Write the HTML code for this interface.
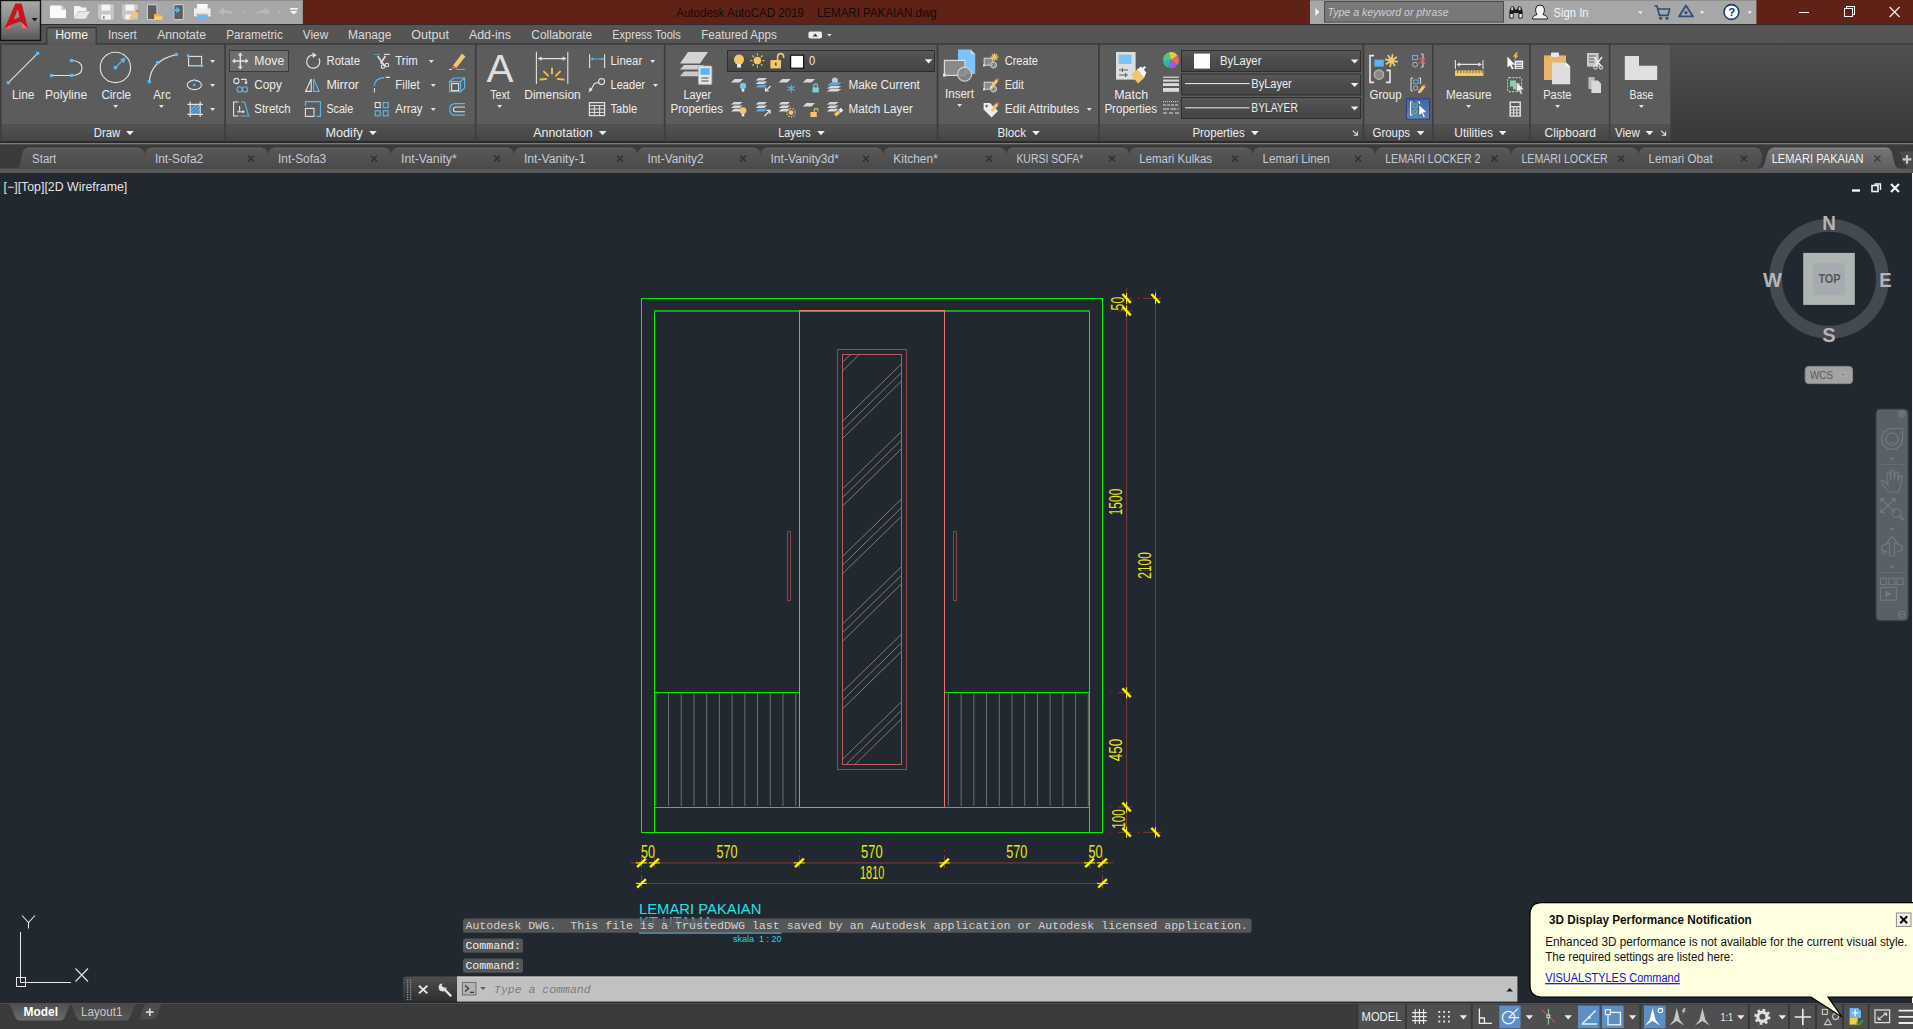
<!DOCTYPE html>
<html lang="en"><head><meta charset="utf-8"><title>Autodesk AutoCAD 2019 - LEMARI PAKAIAN.dwg</title>
<style>
html,body{margin:0;padding:0;background:#212830;overflow:hidden}
body{width:1913px;height:1029px;position:relative;font-family:"Liberation Sans",sans-serif}
.r{position:absolute;left:0;width:1913px;overflow:hidden}
.r svg{display:block}
.titlebar{background:#602116}
.menubar{background:#555555}
.ribbon{background:#454545}
.doctabs{background:#3b3b3b}
.canvas{background:#212830}
.statusbar{background:#3b3b3b}
.appbtn{width:42px}
text{white-space:pre}
</style></head><body>
<div class="r titlebar" style="top:0px;height:24px">
<svg width="1913" height="24" viewBox="0 0 1913 24">
<rect x="41" y="0" width="261.8" height="24" fill="#a7a7a7"/><rect x="41" y="0" width="261.8" height="1" fill="#8e8e8e"/>
<rect x="1310" y="0" width="446.4" height="24" fill="#a7a7a7"/><rect x="1310" y="0" width="446.4" height="1" fill="#8e8e8e"/>
<path d="M50 5.4 H61.4 L66 10 V18 H50 Z" fill="#fafafa"/><path d="M61.4 5.4 V10 H66 Z" fill="#c8c8c8"/>
<path d="M74 6 H80 L81.4 7.6 H86.4 V11 H78.6 L74 18.6 Z" fill="#f4f4f4"/><path d="M78.8 11.4 H90 L85.6 18.8 H74.2 Z" fill="#e4e8f0"/>
<path d="M98 4.6 H114 V19.6 H100 L98 17.6 Z" fill="#c6c6c6"/><rect x="101.4" y="4.6" width="9" height="6" fill="#f4f4f4"/><rect x="101.4" y="14.6" width="9.4" height="5" fill="#f4f4f4"/><rect x="103" y="16" width="1.6" height="3" fill="#8a8a8a"/>
<path d="M122 4.6 H138 V19.6 H124 L122 17.6 Z" fill="#c6c6c6"/><rect x="125.4" y="4.6" width="9" height="6" fill="#f4f4f4"/><rect x="125.4" y="14.6" width="6" height="5" fill="#f4f4f4"/><path d="M129.4 17.6 L135.4 10.6 L138.4 13 L132.4 19.6 L129 19.8 Z" fill="#f0c674"/><path d="M135.4 10.6 L136.6 9.4 L139.4 11.8 L138.4 13 Z" fill="#e06464"/>
<rect x="147.4" y="4.6" width="9.6" height="15" rx="1" fill="#5e5e5e" stroke="#c8c8c8" stroke-width="1.2"/><path d="M154 14 H158 L159 15 H162 V19.8 H154 Z" fill="#f0b040"/><path d="M155 16.4 H163 L161.6 19.8 H154 Z" fill="#f8d070"/>
<rect x="173.8" y="4.6" width="9.6" height="15" rx="1" fill="#5e5e5e" stroke="#c8c8c8" stroke-width="1.2"/><path d="M171.4 9 H176.4 V6.6 L180.4 10 L176.4 13.4 V11 H171.4 Z" fill="#58b4f0"/>
<rect x="197" y="4" width="10.6" height="5" fill="#fafafa"/><rect x="194" y="8.4" width="16.6" height="8" fill="#f0f0f0"/><rect x="197" y="14.6" width="10.6" height="5.2" fill="#6cb8f0"/><rect x="196" y="13.6" width="12.6" height="1.4" fill="#bcbcbc"/>
<path d="M218 11.6 L224 7.4 V10 Q232 9.6 233.6 14.8 Q230.6 12.4 224 13 V15.6 Z" fill="#b8b8b8"/>
<path d="M241.3 10.7 h4.6 l-2.3 2.6 z" fill="#b8b8b8"/>
<path d="M270.6 11.6 L264.6 7.4 V10 Q256.6 9.6 255 14.8 Q258 12.4 264.6 13 V15.6 Z" fill="#b8b8b8"/>
<path d="M277.1 10.7 h4.6 l-2.3 2.6 z" fill="#b8b8b8"/>
<rect x="290" y="8" width="7.6" height="1.6" fill="#f6f6f6"/><path d="M290.0 11.0 h7.6 l-3.8 3.6 z" fill="#f6f6f6"/>
<text x="676.2" y="16.5" font-family='"Liberation Sans",sans-serif' font-size="12" fill="#120c0a" textLength="260.6" lengthAdjust="spacingAndGlyphs" xml:space="preserve">Autodesk AutoCAD 2019    LEMARI PAKAIAN.dwg</text>
<path d="M1315.4 8 V16 L1319.4 12 Z" fill="#f4f4f4"/>
<rect x="1324.5" y="1.5" width="179" height="20.6" fill="#787878" stroke="#4c4c4c" stroke-width="1"/>
<text x="1327.6" y="16.4" font-family='"Liberation Sans",sans-serif' font-size="11.6" fill="#cfcfcf" font-style="italic" textLength="121.0" lengthAdjust="spacingAndGlyphs" >Type a keyword or phrase</text>
<path d="M1509.4 18.6 V11 L1511 6.4 H1514 L1515 9.6 H1517 L1518 6.4 H1521 L1522.6 11 V18.6 H1518.4 V13 H1513.6 V18.6 Z" fill="#1a1a1a"/><rect x="1510.4" y="14" width="2.4" height="3.6" fill="#e8e8e8"/><rect x="1519.4" y="14" width="2.4" height="3.6" fill="#e8e8e8"/><rect x="1511.2" y="7.2" width="2" height="3" fill="#d0d0d0"/><rect x="1518.6" y="7.2" width="2" height="3" fill="#d0d0d0"/>
<path d="M1532.4 19 Q1532.6 15.6 1537 14.6 Q1535.4 12.6 1535.6 9 Q1536 5 1540 5 Q1544 5 1544.4 9 Q1544.6 12.6 1543 14.6 Q1547.4 15.6 1547.6 19 Z" fill="#f2f2f2" stroke="#222" stroke-width="1"/>
<text x="1553.6" y="17.0" font-family='"Liberation Sans",sans-serif' font-size="12.4" fill="#eef6f6" textLength="35.0" lengthAdjust="spacingAndGlyphs" >Sign In</text>
<path d="M1638.1 11.3 h4.6 l-2.3 2.6 z" fill="#f0f0f0"/>
<path d="M1654.4 6 H1657 L1659.4 15.4 H1668 L1669.6 9 H1658" stroke="#24507c" stroke-width="1.6" fill="none"/><circle cx="1660.6" cy="18.2" r="1.5" fill="#24507c"/><circle cx="1667" cy="18.2" r="1.5" fill="#24507c"/>
<path d="M1686 5.4 L1693 16.4 H1679 Z" stroke="#2c4f7c" stroke-width="1.8" fill="none" stroke-linejoin="round"/><circle cx="1686" cy="12.6" r="1.6" fill="#2c4f7c"/>
<path d="M1699.7 11.3 h4.6 l-2.3 2.6 z" fill="#f0f0f0"/>
<circle cx="1731.4" cy="12" r="7.4" fill="#fafafa" stroke="#1c3c78" stroke-width="1.6"/>
<text x="1728.2" y="16.3" font-family='"Liberation Sans",sans-serif' font-size="11.5" fill="#1c3c78" font-weight="bold" >?</text>
<path d="M1747.5 11.3 h4.6 l-2.3 2.6 z" fill="#f0f0f0"/>
<g stroke="#f4f4f4" stroke-width="1" fill="none" shape-rendering="crispEdges">
<path d="M1799 12.5 H1809"/>
<rect x="1844.5" y="8.5" width="8" height="8"/><path d="M1846.5 8.5 V6.5 H1854.5 V14.5 H1852.5"/>
</g>
<path d="M1889.6 7 L1899.6 17 M1899.6 7 L1889.6 17" stroke="#f4f4f4" stroke-width="1.1" fill="none"/>
</svg>
</div>
<div class="r menubar" style="top:24px;height:20px">
<svg width="1913" height="20" viewBox="0 24 1913 20">
<defs><linearGradient id="hometab" x1="0" y1="0" x2="0" y2="1"><stop offset="0" stop-color="#626262"/><stop offset="1" stop-color="#5c5c5c"/></linearGradient></defs>
<rect x="0" y="24" width="1913" height="1" fill="#2e2e2e"/>
<rect x="0" y="43.3" width="1913" height="1.4" fill="#353535"/>
<path d="M46.8 45 V29 Q46.8 27.6 48.2 27.6 H94.8 Q96.2 27.6 96.2 29 V45" fill="url(#hometab)" stroke="#343434" stroke-width="1.1"/>
<text x="55.2" y="39.3" font-family='"Liberation Sans",sans-serif' font-size="12" fill="#f4f4f4" textLength="32.8" lengthAdjust="spacingAndGlyphs" >Home</text>
<text x="108.0" y="39.3" font-family='"Liberation Sans",sans-serif' font-size="12" fill="#dadada" textLength="28.8" lengthAdjust="spacingAndGlyphs" >Insert</text>
<text x="157.2" y="39.3" font-family='"Liberation Sans",sans-serif' font-size="12" fill="#dadada" textLength="48.8" lengthAdjust="spacingAndGlyphs" >Annotate</text>
<text x="226.2" y="39.3" font-family='"Liberation Sans",sans-serif' font-size="12" fill="#dadada" textLength="56.6" lengthAdjust="spacingAndGlyphs" >Parametric</text>
<text x="302.8" y="39.3" font-family='"Liberation Sans",sans-serif' font-size="12" fill="#dadada" textLength="25.4" lengthAdjust="spacingAndGlyphs" >View</text>
<text x="348.0" y="39.3" font-family='"Liberation Sans",sans-serif' font-size="12" fill="#dadada" textLength="43.4" lengthAdjust="spacingAndGlyphs" >Manage</text>
<text x="411.2" y="39.3" font-family='"Liberation Sans",sans-serif' font-size="12" fill="#dadada" textLength="37.8" lengthAdjust="spacingAndGlyphs" >Output</text>
<text x="469.0" y="39.3" font-family='"Liberation Sans",sans-serif' font-size="12" fill="#dadada" textLength="41.9" lengthAdjust="spacingAndGlyphs" >Add-ins</text>
<text x="531.3" y="39.3" font-family='"Liberation Sans",sans-serif' font-size="12" fill="#dadada" textLength="60.9" lengthAdjust="spacingAndGlyphs" >Collaborate</text>
<text x="612.2" y="39.3" font-family='"Liberation Sans",sans-serif' font-size="12" fill="#dadada" textLength="68.6" lengthAdjust="spacingAndGlyphs" >Express Tools</text>
<text x="701.2" y="39.3" font-family='"Liberation Sans",sans-serif' font-size="12" fill="#dadada" textLength="75.6" lengthAdjust="spacingAndGlyphs" >Featured Apps</text>
<rect x="808.4" y="31.6" width="13.6" height="7" rx="2" fill="#ececec"/><path d="M812.6 36.4 h5.2 l-2.6 -2.8 z" fill="#3c3c3c"/>
<path d="M827.1 33.9 h4.6 l-2.3 2.6 z" fill="#e0e0e0"/>
</svg>
</div>
<div class="r ribbon" style="top:44px;height:97px">
<svg width="1913" height="97" viewBox="0 44 1913 97">
<defs><linearGradient id="rbg" x1="0" y1="0" x2="0" y2="1"><stop offset="0" stop-color="#505050"/><stop offset="1" stop-color="#383838"/></linearGradient><linearGradient id="ptit" x1="0" y1="0" x2="0" y2="1"><stop offset="0" stop-color="#535353"/><stop offset="1" stop-color="#444444"/></linearGradient>
<linearGradient id="ddg" x1="0" y1="0" x2="0" y2="1"><stop offset="0" stop-color="#585858"/><stop offset="0.5" stop-color="#4b4b4b"/><stop offset="1" stop-color="#464646"/></linearGradient>
<linearGradient id="selb" x1="0" y1="0" x2="0" y2="1"><stop offset="0" stop-color="#3f64ac"/><stop offset="1" stop-color="#5f86b8"/></linearGradient></defs>
<rect x="0" y="43.3" width="1913" height="1.4" fill="#353535"/>
<rect x="47.4" y="43" width="48.2" height="2" fill="#5c5c5c"/>
<rect x="0" y="44.7" width="1675" height="96.7" fill="#3e3e3e"/>
<rect x="1671" y="44.7" width="242" height="96.7" fill="url(#rbg)"/>
<rect x="1.6" y="44.7" width="222.6" height="79.7" fill="#5c5c5c"/>
<rect x="1.6" y="124.4" width="222.6" height="17" fill="url(#ptit)"/>
<text x="93.8" y="136.7" font-family='"Liberation Sans",sans-serif' font-size="12" fill="#ececec" textLength="26.4" lengthAdjust="spacingAndGlyphs" >Draw</text>
<path d="M126.1 131.1 h7.6 l-3.8 4.2 z" fill="#f0f0f0"/>
<rect x="226.0" y="44.7" width="248.8" height="79.7" fill="#5c5c5c"/>
<rect x="226.0" y="124.4" width="248.8" height="17" fill="url(#ptit)"/>
<text x="325.6" y="136.7" font-family='"Liberation Sans",sans-serif' font-size="12" fill="#ececec" textLength="37.1" lengthAdjust="spacingAndGlyphs" >Modify</text>
<path d="M369.1 131.1 h7.6 l-3.8 4.2 z" fill="#f0f0f0"/>
<rect x="476.6" y="44.7" width="187.2" height="79.7" fill="#5c5c5c"/>
<rect x="476.6" y="124.4" width="187.2" height="17" fill="url(#ptit)"/>
<text x="533.2" y="136.7" font-family='"Liberation Sans",sans-serif' font-size="12" fill="#ececec" textLength="59.6" lengthAdjust="spacingAndGlyphs" >Annotation</text>
<path d="M598.9 131.1 h7.6 l-3.8 4.2 z" fill="#f0f0f0"/>
<rect x="665.6" y="44.7" width="271.0" height="79.7" fill="#5c5c5c"/>
<rect x="665.6" y="124.4" width="271.0" height="17" fill="url(#ptit)"/>
<text x="778.3" y="136.7" font-family='"Liberation Sans",sans-serif' font-size="12" fill="#ececec" textLength="32.5" lengthAdjust="spacingAndGlyphs" >Layers</text>
<path d="M817.2 131.1 h7.6 l-3.8 4.2 z" fill="#f0f0f0"/>
<rect x="938.4" y="44.7" width="159.6" height="79.7" fill="#5c5c5c"/>
<rect x="938.4" y="124.4" width="159.6" height="17" fill="url(#ptit)"/>
<text x="997.5" y="136.7" font-family='"Liberation Sans",sans-serif' font-size="12" fill="#ececec" textLength="28.5" lengthAdjust="spacingAndGlyphs" >Block</text>
<path d="M1032.2 131.1 h7.6 l-3.8 4.2 z" fill="#f0f0f0"/>
<rect x="1099.8" y="44.7" width="262.6" height="79.7" fill="#5c5c5c"/>
<rect x="1099.8" y="124.4" width="262.6" height="17" fill="url(#ptit)"/>
<text x="1192.4" y="136.7" font-family='"Liberation Sans",sans-serif' font-size="12" fill="#ececec" textLength="52.3" lengthAdjust="spacingAndGlyphs" >Properties</text>
<path d="M1251.1 131.1 h7.6 l-3.8 4.2 z" fill="#f0f0f0"/>
<rect x="1364.4" y="44.7" width="67.6" height="79.7" fill="#5c5c5c"/>
<rect x="1364.4" y="124.4" width="67.6" height="17" fill="url(#ptit)"/>
<text x="1372.5" y="136.7" font-family='"Liberation Sans",sans-serif' font-size="12" fill="#ececec" textLength="37.5" lengthAdjust="spacingAndGlyphs" >Groups</text>
<path d="M1416.8 131.1 h7.6 l-3.8 4.2 z" fill="#f0f0f0"/>
<rect x="1433.6" y="44.7" width="95.4" height="79.7" fill="#5c5c5c"/>
<rect x="1433.6" y="124.4" width="95.4" height="17" fill="url(#ptit)"/>
<text x="1454.2" y="136.7" font-family='"Liberation Sans",sans-serif' font-size="12" fill="#ececec" textLength="38.8" lengthAdjust="spacingAndGlyphs" >Utilities</text>
<path d="M1498.9 131.1 h7.6 l-3.8 4.2 z" fill="#f0f0f0"/>
<rect x="1530.8" y="44.7" width="78.0" height="79.7" fill="#5c5c5c"/>
<rect x="1530.8" y="124.4" width="78.0" height="17" fill="url(#ptit)"/>
<text x="1544.6" y="136.7" font-family='"Liberation Sans",sans-serif' font-size="12" fill="#ececec" textLength="51.4" lengthAdjust="spacingAndGlyphs" >Clipboard</text>
<rect x="1610.4" y="44.7" width="60.0" height="79.7" fill="#5c5c5c"/>
<rect x="1610.4" y="124.4" width="60.0" height="17" fill="url(#ptit)"/>
<text x="1615.0" y="136.7" font-family='"Liberation Sans",sans-serif' font-size="12" fill="#ececec" textLength="24.7" lengthAdjust="spacingAndGlyphs" >View</text>
<path d="M1645.7 131.1 h7.6 l-3.8 4.2 z" fill="#f0f0f0"/>
<path d="M1352.8 130.6 l4.6 4.6 m0 -3.8 v3.8 h-3.8" stroke="#e0e0e0" stroke-width="1.1" fill="none"/>
<path d="M1661.0 130.6 l4.6 4.6 m0 -3.8 v3.8 h-3.8" stroke="#e0e0e0" stroke-width="1.1" fill="none"/>
<path d="M8.4 82.6 L37.6 53.4" stroke="#e2e2e2" stroke-width="1.1"/><rect x="6.8" y="81.0" width="3.2" height="3.2" fill="#5cb8f0"/><rect x="36.0" y="51.8" width="3.2" height="3.2" fill="#5cb8f0"/>
<text x="12.0" y="98.8" font-family='"Liberation Sans",sans-serif' font-size="12" fill="#ececec" textLength="22.3" lengthAdjust="spacingAndGlyphs" >Line</text>
<path d="M51.5 75.5 H71.5 M71.5 60.5 Q82 61 82 68 Q82 75.5 71.5 75.5" stroke="#e2e2e2" stroke-width="1.1" fill="none"/><rect x="49.9" y="73.9" width="3.2" height="3.2" fill="#5cb8f0"/><rect x="69.9" y="73.9" width="3.2" height="3.2" fill="#5cb8f0"/><rect x="69.9" y="58.9" width="3.2" height="3.2" fill="#5cb8f0"/>
<text x="45.0" y="98.8" font-family='"Liberation Sans",sans-serif' font-size="12" fill="#ececec" textLength="42.2" lengthAdjust="spacingAndGlyphs" >Polyline</text>
<circle cx="115.4" cy="67.4" r="15.2" stroke="#e2e2e2" stroke-width="1.1" fill="none"/>
<path d="M116 67 L123.4 59.6" stroke="#5cb8f0" stroke-width="1.2"/><path d="M125.6 57.6 L120 59.2 L124 63.2 Z" fill="#5cb8f0"/><rect x="113.8" y="66.0" width="3.2" height="3.2" fill="#5cb8f0"/>
<text x="101.4" y="98.8" font-family='"Liberation Sans",sans-serif' font-size="12" fill="#ececec" textLength="29.6" lengthAdjust="spacingAndGlyphs" >Circle</text>
<path d="M113.1 105.1 h5.0 l-2.5 3.0 z" fill="#e2e2e2"/>
<path d="M149.3 81.6 Q151 60 176.4 54.6" stroke="#e2e2e2" stroke-width="1.1" fill="none"/><rect x="147.7" y="80.0" width="3.2" height="3.2" fill="#5cb8f0"/><rect x="156.0" y="61.0" width="3.2" height="3.2" fill="#5cb8f0"/><rect x="174.8" y="53.0" width="3.2" height="3.2" fill="#5cb8f0"/>
<text x="153.3" y="98.8" font-family='"Liberation Sans",sans-serif' font-size="12" fill="#ececec" textLength="17.4" lengthAdjust="spacingAndGlyphs" >Arc</text>
<path d="M158.9 105.1 h5.0 l-2.5 3.0 z" fill="#e2e2e2"/>
<rect x="188.6" y="56.4" width="13" height="9.4" stroke="#e2e2e2" stroke-width="1.1" fill="none"/><rect x="186.8" y="54.4" width="2.4" height="2.4" fill="#5cb8f0"/><rect x="200.8" y="64.8" width="2.4" height="2.4" fill="#5cb8f0"/>
<path d="M210.1 59.9 h5.0 l-2.5 3.0 z" fill="#e2e2e2"/>
<ellipse cx="194.4" cy="85" rx="7.2" ry="4.6" stroke="#e2e2e2" stroke-width="1.1" fill="none"/><rect x="193.1" y="78.9" width="2.2" height="2.2" fill="#5cb8f0"/><rect x="193.1" y="83.9" width="2.2" height="2.2" fill="#5cb8f0"/><rect x="200.3" y="83.9" width="2.2" height="2.2" fill="#5cb8f0"/>
<path d="M210.1 83.9 h5.0 l-2.5 3.0 z" fill="#e2e2e2"/>
<rect x="190.4" y="104.6" width="9.6" height="9.6" fill="#3d88c4"/><path d="M191 110 l5 -5 M191 113.6 l8.6 -8.6 M194.6 114 l5 -5" stroke="#8cc8f4" stroke-width="0.9"/>
<path d="M187.4 104.4 H203 M187.4 114.4 H203 M190.2 101.6 V117 M200.2 101.6 V117" stroke="#e2e2e2" stroke-width="1.1"/>
<path d="M210.1 107.9 h5.0 l-2.5 3.0 z" fill="#e2e2e2"/>
<rect x="229.5" y="50.5" width="59" height="21" fill="#6d6d6d" stroke="#3a3a3a" stroke-width="1"/>
<path d="M233.6 61 H247 M240.3 54.2 V67.8" stroke="#e2e2e2" stroke-width="1.4"/>
<path d="M240.3 52.4 l-2.6 3 h5.2 z M240.3 69.6 l-2.6 -3 h5.2 z M232 61 l3 -2.6 v5.2 z M248.6 61 l-3 -2.6 v5.2 z" fill="#e2e2e2"/>
<text x="254.3" y="64.7" font-family='"Liberation Sans",sans-serif' font-size="12" fill="#ececec" textLength="29.9" lengthAdjust="spacingAndGlyphs" >Move</text>
<circle cx="236.4" cy="81" r="2.6" stroke="#e2e2e2" stroke-width="1.1" fill="none"/><path d="M241 79.4 H246 V82.6" stroke="#e2e2e2" stroke-width="1.1" fill="none"/><path d="M246 84.4 l-1.8 -2.4 h3.6 z" fill="#e2e2e2"/>
<circle cx="239.6" cy="89.4" r="2.6" stroke="#5cb8f0" stroke-width="1.1" fill="none"/><circle cx="245" cy="89.4" r="2.6" stroke="#5cb8f0" stroke-width="1.1" fill="none"/>
<text x="254.3" y="88.6" font-family='"Liberation Sans",sans-serif' font-size="12" fill="#ececec" textLength="27.5" lengthAdjust="spacingAndGlyphs" >Copy</text>
<path d="M238.6 102 H233.6 V116 H238.6 M239.6 106 V111.6" stroke="#e2e2e2" stroke-width="1.1" fill="none"/><path d="M237 111.8 H243.6" stroke="#e2e2e2" stroke-width="1.1"/><path d="M245 111.8 l-2.6 -1.8 v3.6 z" fill="#e2e2e2"/>
<path d="M241 102 H244.6 L248.6 116 H240.6" stroke="#5cb8f0" stroke-width="1.1" fill="none"/>
<text x="254.3" y="112.6" font-family='"Liberation Sans",sans-serif' font-size="12" fill="#ececec" textLength="36.3" lengthAdjust="spacingAndGlyphs" >Stretch</text>
<path d="M313.4 55 A6.6 6.6 0 1 0 319 58.4" stroke="#e2e2e2" stroke-width="1.2" fill="none"/><path d="M312.6 52.2 L316.6 55.2 L312.6 58 Z" fill="#e2e2e2"/>
<text x="326.4" y="64.7" font-family='"Liberation Sans",sans-serif' font-size="12" fill="#ececec" textLength="33.6" lengthAdjust="spacingAndGlyphs" >Rotate</text>
<path d="M311.2 79 V91.4 H305.6 Z" stroke="#e2e2e2" stroke-width="1.1" fill="none"/><path d="M313.6 79 V91.4 H319.2 Z" stroke="#5cb8f0" stroke-width="1.1" fill="none"/>
<text x="326.4" y="88.6" font-family='"Liberation Sans",sans-serif' font-size="12" fill="#ececec" textLength="32.6" lengthAdjust="spacingAndGlyphs" >Mirror</text>
<rect x="305.4" y="108.4" width="8.6" height="8" stroke="#e2e2e2" stroke-width="1.1" fill="none"/><path d="M305.4 106 V101.6 H320.4 V116.4 H316.4" stroke="#5cb8f0" stroke-width="1.1" fill="none"/>
<text x="326.4" y="112.6" font-family='"Liberation Sans",sans-serif' font-size="12" fill="#ececec" textLength="26.8" lengthAdjust="spacingAndGlyphs" >Scale</text>
<path d="M374 54.4 H380" stroke="#5cb8f0" stroke-width="1" stroke-dasharray="1.4 1"/><path d="M384 54.4 H390" stroke="#e2e2e2" stroke-width="1.1"/>
<path d="M377.6 56 L384.6 66 M385.4 56 L380.6 63.6" stroke="#e2e2e2" stroke-width="1.6" fill="none"/><circle cx="383" cy="66.6" r="1.8" stroke="#e2e2e2" stroke-width="1.1" fill="none"/><circle cx="387" cy="65" r="1.8" stroke="#e2e2e2" stroke-width="1.1" fill="none"/>
<text x="395.3" y="64.7" font-family='"Liberation Sans",sans-serif' font-size="12" fill="#ececec" textLength="22.4" lengthAdjust="spacingAndGlyphs" >Trim</text>
<path d="M428.8 59.9 h5.0 l-2.5 3.0 z" fill="#e2e2e2"/>
<path d="M374.4 86 Q374.6 78 384 77.6" stroke="#5cb8f0" stroke-width="1.2" fill="none"/><path d="M374.4 88 V92.4 M385.6 77.4 H390" stroke="#e2e2e2" stroke-width="1.1"/>
<text x="395.3" y="88.6" font-family='"Liberation Sans",sans-serif' font-size="12" fill="#ececec" textLength="24.4" lengthAdjust="spacingAndGlyphs" >Fillet</text>
<path d="M430.8 83.9 h5.0 l-2.5 3.0 z" fill="#e2e2e2"/>
<rect x="375.2" y="102.6" width="5" height="5" stroke="#e2e2e2" stroke-width="1.1" fill="none"/>
<rect x="383.2" y="102.6" width="5" height="5" stroke="#5cb8f0" stroke-width="1.1" fill="none"/>
<rect x="375.2" y="110.8" width="5" height="5" stroke="#5cb8f0" stroke-width="1.1" fill="none"/>
<rect x="383.2" y="110.8" width="5" height="5" stroke="#5cb8f0" stroke-width="1.1" fill="none"/>
<text x="395.3" y="112.6" font-family='"Liberation Sans",sans-serif' font-size="12" fill="#ececec" textLength="27.2" lengthAdjust="spacingAndGlyphs" >Array</text>
<path d="M430.8 107.9 h5.0 l-2.5 3.0 z" fill="#e2e2e2"/>
<path d="M453 65.4 L462 53.6 L465.4 56.4 L456.4 68 Z" fill="#f4c66c"/><path d="M453 65.4 L456.4 68 L454.6 69.6 L451.6 67.4 Z" fill="#e85a5a"/><path d="M449 69.4 H452" stroke="#e2e2e2" stroke-width="1"/><path d="M456 69.4 H465" stroke="#5cb8f0" stroke-width="1"/>
<path d="M449.6 81.6 L453.6 78 H464.6 L460.6 81.6 Z M460.6 81.6 V91.6 L464.6 88 V78" stroke="#5cb8f0" stroke-width="1.1" fill="none"/><rect x="451.6" y="83.6" width="7" height="7" stroke="#e2e2e2" stroke-width="1.1" fill="none"/><path d="M449.6 81.6 V91.6 H460.6" stroke="#5cb8f0" stroke-width="1.1" fill="none"/>
<path d="M465 103.6 H455.6 Q449.8 103.6 449.8 109.4 Q449.8 115.2 455.6 115.2 H465" stroke="#5cb8f0" stroke-width="1.2" fill="none"/><path d="M465 107 H456 Q453.4 107 453.4 109.4 Q453.4 111.8 456 111.8 H465" stroke="#e2e2e2" stroke-width="1.1" fill="none"/>
<text x="486.4" y="81.9" font-family='"Liberation Sans",sans-serif' font-size="39" fill="#dedede" textLength="27.0" lengthAdjust="spacingAndGlyphs" >A</text>
<text x="490.3" y="98.8" font-family='"Liberation Sans",sans-serif' font-size="12" fill="#ececec" textLength="19.5" lengthAdjust="spacingAndGlyphs" >Text</text>
<path d="M497.1 105.1 h5.0 l-2.5 3.0 z" fill="#e2e2e2"/>
<path d="M536.4 51.8 V84 M567.8 51.8 V84 M539.6 58.6 H564.6" stroke="#e2e2e2" stroke-width="1.1" fill="none"/><path d="M537.6 58.6 l4 -2.2 v4.4 z M566.6 58.6 l-4 -2.2 v4.4 z" fill="#e2e2e2"/>
<path d="M552.0 68.4 L552.0 73.6" stroke="#f4b848" stroke-width="2" stroke-linecap="round"/>
<path d="M544.0 71.6 L548.0 75.6" stroke="#f4b848" stroke-width="2" stroke-linecap="round"/>
<path d="M560.0 71.6 L556.0 75.6" stroke="#f4b848" stroke-width="2" stroke-linecap="round"/>
<path d="M540.6 79.6 L546.0 79.0" stroke="#f4b848" stroke-width="2" stroke-linecap="round"/>
<path d="M563.6 79.6 L558.0 79.0" stroke="#f4b848" stroke-width="2" stroke-linecap="round"/>
<text x="524.3" y="98.8" font-family='"Liberation Sans",sans-serif' font-size="12" fill="#ececec" textLength="56.4" lengthAdjust="spacingAndGlyphs" >Dimension</text>
<path d="M589.6 54.2 V68 M604.6 54.2 V68" stroke="#e2e2e2" stroke-width="1.1"/><path d="M591 59 H603.4" stroke="#5cb8f0" stroke-width="1"/><path d="M590.4 59 l2.6 -1.6 v3.2 z M604 59 l-2.6 -1.6 v3.2 z" fill="#5cb8f0"/>
<text x="610.5" y="64.7" font-family='"Liberation Sans",sans-serif' font-size="12" fill="#ececec" textLength="31.7" lengthAdjust="spacingAndGlyphs" >Linear</text>
<path d="M650.2 59.9 h5.0 l-2.5 3.0 z" fill="#e2e2e2"/>
<circle cx="601.6" cy="81.6" r="3" stroke="#e2e2e2" stroke-width="1.1" fill="none"/><path d="M598.6 82.4 L594.6 83.4 L590.6 90" stroke="#e2e2e2" stroke-width="1.1" fill="none"/><path d="M588.6 92.4 L589.6 87.6 L592.8 89.8 Z" fill="#e2e2e2"/>
<text x="610.5" y="88.6" font-family='"Liberation Sans",sans-serif' font-size="12" fill="#ececec" textLength="34.5" lengthAdjust="spacingAndGlyphs" >Leader</text>
<path d="M653.0 83.9 h5.0 l-2.5 3.0 z" fill="#e2e2e2"/>
<rect x="589.4" y="102.6" width="15.2" height="13" stroke="#e2e2e2" stroke-width="1.2" fill="none"/><path d="M589.4 105.6 H604.6 M589.4 109 H604.6 M589.4 112.4 H604.6 M594.4 105.6 V115.6 M599.6 105.6 V115.6" stroke="#e2e2e2" stroke-width="1"/>
<text x="610.5" y="112.6" font-family='"Liberation Sans",sans-serif' font-size="12" fill="#ececec" textLength="26.7" lengthAdjust="spacingAndGlyphs" >Table</text>
<path d="M688.0 52.0 H708.0 L700.0 63.6 H680.0 Z" fill="#d4d4d4"/>
<path d="M684.0 65.0 H704.0 L700.0 69.6 H680.0 Z" fill="#cfcfcf"/>
<path d="M684.0 71.6 H704.0 L700.0 76.2 H680.0 Z" fill="#cacaca"/>
<rect x="698.4" y="66" width="13.4" height="18.4" rx="1" fill="#e6e6e6" stroke="#b0b0b0" stroke-width="0.8"/><rect x="700.4" y="68.2" width="9.4" height="6.6" fill="#5cb4f4"/><path d="M701.4 78 H708.6 M701.4 81 H708.6" stroke="#4a4a4a" stroke-width="1"/>
<text x="683.4" y="98.9" font-family='"Liberation Sans",sans-serif' font-size="12" fill="#ececec" textLength="27.8" lengthAdjust="spacingAndGlyphs" >Layer</text>
<text x="670.5" y="113.4" font-family='"Liberation Sans",sans-serif' font-size="12" fill="#ececec" textLength="52.5" lengthAdjust="spacingAndGlyphs" >Properties</text>
<rect x="727.5" y="50.5" width="207" height="21" fill="url(#ddg)" stroke="#2e2e2e" stroke-width="1"/>
<circle cx="739" cy="59.6" r="5" fill="#f4c66c"/><rect x="737" y="64" width="4" height="3.6" fill="#e8e8e8"/>
<circle cx="757.4" cy="60.6" r="3.8" fill="#f4c66c"/>
<path d="M762.4 60.6 L764.6 60.6" stroke="#f4c66c" stroke-width="1.1"/>
<path d="M760.9 64.1 L762.5 65.7" stroke="#f4c66c" stroke-width="1.1"/>
<path d="M757.4 65.6 L757.4 67.8" stroke="#f4c66c" stroke-width="1.1"/>
<path d="M753.9 64.1 L752.3 65.7" stroke="#f4c66c" stroke-width="1.1"/>
<path d="M752.4 60.6 L750.2 60.6" stroke="#f4c66c" stroke-width="1.1"/>
<path d="M753.9 57.1 L752.3 55.5" stroke="#f4c66c" stroke-width="1.1"/>
<path d="M757.4 55.6 L757.4 53.4" stroke="#f4c66c" stroke-width="1.1"/>
<path d="M760.9 57.1 L762.5 55.5" stroke="#f4c66c" stroke-width="1.1"/>
<rect x="770.4" y="60" width="10.6" height="8.4" fill="#f4c66c"/><path d="M777.6 60 V56.6 Q777.6 53.6 780.6 53.6 Q783.6 53.6 783.6 56.6 V58" stroke="#f4c66c" stroke-width="1.6" fill="none"/><rect x="775" y="62.6" width="1.6" height="3" fill="#5a4a2a"/>
<rect x="790.6" y="55.2" width="13" height="13" fill="#ffffff" stroke="#101010" stroke-width="1.2"/>
<text x="809.0" y="64.7" font-family='"Liberation Sans",sans-serif' font-size="12" fill="#ececec" textLength="6.2" lengthAdjust="spacingAndGlyphs" >0</text>
<path d="M924.8 59.3 h7.6 l-3.8 4.2 z" fill="#f0f0f0"/>
<path d="M734.6 79.0 H743.2 L739.6 82.4 H731.0 Z" fill="#d8d8d8"/>
<circle cx="743.0" cy="86.0" r="3.2" fill="#7cc4e0"/><rect x="741.7" y="89.0" width="2.6" height="2.6" fill="#e8e8e8"/>
<path d="M758.5 78.0 H767.1 L764.1 80.6 H755.5 Z" fill="#d8d8d8"/>
<path d="M758.5 81.4 H767.1 L764.1 84.0 H755.5 Z" fill="#d8d8d8"/>
<path d="M758.5 84.8 H767.1 L764.1 87.4 H755.5 Z" fill="#5aa8e8"/>
<path d="M770.5 86.0 l-5 5 m0 -3.4 v3.4 h3.4" stroke="#e8e8e8" stroke-width="1.2" fill="none"/>
<path d="M782.2 79.0 H790.8 L787.2 82.4 H778.6 Z" fill="#d8d8d8"/>
<path d="M791.2 84.4 v8 m-3.6 -6 l7.2 4 m0 -4 l-7.2 4" stroke="#58b0e8" stroke-width="1.2"/>
<path d="M806.4 79.0 H815.0 L811.4 82.4 H802.8 Z" fill="#d8d8d8"/>
<rect x="812.4" y="87.4" width="6.4" height="5" fill="#7cd0e0"/><path d="M813.7 87.4 v-1.6 a1.9 1.9 0 0 1 3.8 0 v1.6" stroke="#7cd0e0" stroke-width="1.1" fill="none"/>
<circle cx="834.9" cy="80.4" r="3" fill="#c8c8c8"/>
<path d="M830.9 82.4 H841.9 L837.9 85.4 H826.9 Z" fill="#5aa8e8"/>
<path d="M830.3 86.0 H841.3 L837.9 88.6 H826.9 Z" fill="#d8d8d8"/>
<path d="M830.3 89.0 H841.3 L837.9 91.6 H826.9 Z" fill="#d8d8d8"/>
<path d="M734.0 102.0 H742.6 L739.6 104.6 H731.0 Z" fill="#d8d8d8"/>
<path d="M734.0 105.4 H742.6 L739.6 108.0 H731.0 Z" fill="#d8d8d8"/>
<path d="M734.0 108.8 H742.6 L739.6 111.4 H731.0 Z" fill="#d8d8d8"/>
<circle cx="743.0" cy="110.6" r="3.4" fill="#f4c66c"/><rect x="741.7" y="113.8" width="2.6" height="2.6" fill="#e8e8e8"/>
<path d="M758.5 102.0 H767.1 L764.1 104.6 H755.5 Z" fill="#d8d8d8"/>
<path d="M758.5 105.4 H767.1 L764.1 108.0 H755.5 Z" fill="#d8d8d8"/>
<path d="M758.5 108.8 H767.1 L764.1 111.4 H755.5 Z" fill="#5aa8e8"/>
<path d="M764.5 116.0 l5.6 -5.6 m-3.6 0 h3.6 v3.6" stroke="#e8e8e8" stroke-width="1.2" fill="none"/>
<path d="M781.6 102.0 H790.2 L787.2 104.6 H778.6 Z" fill="#d8d8d8"/>
<path d="M781.6 105.4 H790.2 L787.2 108.0 H778.6 Z" fill="#d8d8d8"/>
<path d="M781.6 108.8 H790.2 L787.2 111.4 H778.6 Z" fill="#d8d8d8"/>
<circle cx="791.0" cy="112.6" r="2.4" fill="#f4c66c"/><circle cx="791.0" cy="112.6" r="4.2" stroke="#f4c66c" stroke-width="1.2" stroke-dasharray="1.2 1.4" fill="none"/>
<path d="M806.4 103.0 H815.0 L811.4 106.4 H802.8 Z" fill="#d8d8d8"/>
<rect x="810.4" y="112.0" width="6.4" height="5" fill="#f4c66c"/><path d="M814.2 112.0 v-1.6 a1.9 1.9 0 0 1 3.8 0 v0.8" stroke="#f4c66c" stroke-width="1.1" fill="none"/>
<path d="M829.9 102.0 H838.5 L835.5 104.6 H826.9 Z" fill="#d8d8d8"/>
<path d="M829.9 105.4 H838.5 L835.5 108.0 H826.9 Z" fill="#d8d8d8"/>
<path d="M829.9 108.8 H838.5 L835.5 111.4 H826.9 Z" fill="#d8d8d8"/>
<path d="M833.9 114.0 l4 -3.6 l2.4 2.6 l-4 3.6 z" fill="#f4c66c"/><path d="M838.3 110.2 l2.6 -2.4 l2.4 2.6 l-2.6 2.4 z" fill="#f0f0f0"/>
<text x="848.4" y="88.6" font-family='"Liberation Sans",sans-serif' font-size="12" fill="#ececec" textLength="71.4" lengthAdjust="spacingAndGlyphs" >Make Current</text>
<text x="848.4" y="112.6" font-family='"Liberation Sans",sans-serif' font-size="12" fill="#ececec" textLength="64.4" lengthAdjust="spacingAndGlyphs" >Match Layer</text>
<path d="M958 49.6 H970.6 L975.2 54.2 V74 H958 Z" fill="#7cc4f8"/><path d="M970.6 49.6 V54.2 H975.2 Z" fill="#b8dcf8"/>
<rect x="944.4" y="60.4" width="20.6" height="15" fill="#8a8a8a" stroke="#dcdcdc" stroke-width="1.2"/><circle cx="964.6" cy="74.2" r="7" fill="#8a8a8a" fill-opacity="0.85" stroke="#d0d0d0" stroke-width="1.2"/><rect x="943" y="73.6" width="3" height="3" fill="#e0e0e0"/>
<text x="945.0" y="98.2" font-family='"Liberation Sans",sans-serif' font-size="12" fill="#ececec" textLength="28.9" lengthAdjust="spacingAndGlyphs" >Insert</text>
<path d="M957.1 104.1 h5.0 l-2.5 3.0 z" fill="#e2e2e2"/>
<rect x="984.2" y="58.2" width="8.6" height="7" fill="#8a8a8a" stroke="#d8d8d8" stroke-width="1"/><circle cx="993.6" cy="65.0" r="3" fill="#8a8a8a" stroke="#d0d0d0" stroke-width="1"/><rect x="983.0" y="64.4" width="2" height="2" fill="#e0e0e0"/>
<path d="M994.6 57.0 L998.4 57.0" stroke="#f4c66c" stroke-width="1.3"/>
<path d="M994.6 57.0 L997.3 59.7" stroke="#f4c66c" stroke-width="1.3"/>
<path d="M994.6 57.0 L994.6 60.8" stroke="#f4c66c" stroke-width="1.3"/>
<path d="M994.6 57.0 L991.9 59.7" stroke="#f4c66c" stroke-width="1.3"/>
<path d="M994.6 57.0 L990.8 57.0" stroke="#f4c66c" stroke-width="1.3"/>
<path d="M994.6 57.0 L991.9 54.3" stroke="#f4c66c" stroke-width="1.3"/>
<path d="M994.6 57.0 L994.6 53.2" stroke="#f4c66c" stroke-width="1.3"/>
<path d="M994.6 57.0 L997.3 54.3" stroke="#f4c66c" stroke-width="1.3"/>
<rect x="984.2" y="82.2" width="8.6" height="7" fill="#8a8a8a" stroke="#d8d8d8" stroke-width="1"/><circle cx="993.6" cy="89.0" r="3" fill="#8a8a8a" stroke="#d0d0d0" stroke-width="1"/><rect x="983.0" y="88.4" width="2" height="2" fill="#e0e0e0"/>
<path d="M990.6 86 L996 79 L998.4 81 L993 88 Z" fill="#f4c66c"/><path d="M996 79 L997 77.6 L999.4 79.6 L998.4 81 Z" fill="#e85a5a"/><path d="M990.6 86 L993 88 L990 88.8 Z" fill="#f0f0f0"/>
<path d="M983.6 103 H990 L998 111 L991.6 117.4 L983.6 109.4 Z" fill="#ececec"/><circle cx="986.6" cy="106" r="1.2" fill="#5c5c5c"/><path d="M990.6 110 L996 103 L998.4 105 L993 112 Z" fill="#f4c66c"/><path d="M996 103 L997 101.6 L999.4 103.6 L998.4 105 Z" fill="#e85a5a"/>
<text x="1004.7" y="64.7" font-family='"Liberation Sans",sans-serif' font-size="12" fill="#ececec" textLength="33.2" lengthAdjust="spacingAndGlyphs" >Create</text>
<text x="1004.7" y="88.6" font-family='"Liberation Sans",sans-serif' font-size="12" fill="#ececec" textLength="19.2" lengthAdjust="spacingAndGlyphs" >Edit</text>
<text x="1004.7" y="112.6" font-family='"Liberation Sans",sans-serif' font-size="12" fill="#ececec" textLength="74.6" lengthAdjust="spacingAndGlyphs" >Edit Attributes</text>
<path d="M1086.8 107.9 h5.0 l-2.5 3.0 z" fill="#e2e2e2"/>
<rect x="1116" y="52" width="19.6" height="27.6" fill="#dedede"/><rect x="1118.6" y="54.6" width="13" height="9.4" fill="#7cc4f8"/><path d="M1119 70 H1128 M1122.4 68 V72 M1119 75 H1128 M1125.6 73 V77" stroke="#5a5a5a" stroke-width="1"/>
<path d="M1131 74.6 L1137 69.6 L1144 78 L1138 83.4 Z" fill="#f4c66c"/><path d="M1137 69.6 L1141 66.4 L1146.4 72.6 L1144 78 Z" fill="#f4f4f4"/><path d="M1141.6 68.6 L1144.6 66 L1146 67.6 L1143 70.4 Z" fill="#f4f4f4"/>
<text x="1114.2" y="98.8" font-family='"Liberation Sans",sans-serif' font-size="12" fill="#ececec" textLength="33.9" lengthAdjust="spacingAndGlyphs" >Match</text>
<text x="1104.4" y="113.4" font-family='"Liberation Sans",sans-serif' font-size="12" fill="#ececec" textLength="52.7" lengthAdjust="spacingAndGlyphs" >Properties</text>
<path d="M1171 60 L1168.6 52.4 A8 8 0 0 1 1177.5 55.4 Z" fill="#e8c84c"/>
<path d="M1171 60 L1177.5 55.4 A8 8 0 0 1 1177.4 64.8 Z" fill="#e86a5a"/>
<path d="M1171 60 L1177.4 64.8 A8 8 0 0 1 1168.4 67.6 Z" fill="#9a5ae8"/>
<path d="M1171 60 L1168.4 67.6 A8 8 0 0 1 1163.0 59.9 Z" fill="#38b4a4"/>
<path d="M1171 60 L1163.0 59.9 A8 8 0 0 1 1168.6 52.4 Z" fill="#4cc878"/>
<rect x="1163" y="76.6" width="16" height="1.2" fill="#dcdcdc"/>
<rect x="1163" y="79.6" width="16" height="2.0" fill="#dcdcdc"/>
<rect x="1163" y="83.2" width="16" height="2.8" fill="#dcdcdc"/>
<rect x="1163" y="88.0" width="16" height="3.8" fill="#dcdcdc"/>
<path d="M1163 101.6 H1179" stroke="#dcdcdc" stroke-width="1" stroke-dasharray="1 1"/><path d="M1163 105 H1179" stroke="#dcdcdc" stroke-width="1" stroke-dasharray="3 1"/><path d="M1163 109 H1179" stroke="#dcdcdc" stroke-width="1.2" stroke-dasharray="6 1.4"/><path d="M1163 113 H1179" stroke="#dcdcdc" stroke-width="1.2" stroke-dasharray="4 2"/>
<rect x="1181.5" y="50.5" width="179" height="21" fill="url(#ddg)" stroke="#2e2e2e" stroke-width="1"/>
<path d="M1350.8 59.4 h7.6 l-3.8 4.2 z" fill="#f0f0f0"/>
<rect x="1181.5" y="74.0" width="179" height="21" fill="url(#ddg)" stroke="#2e2e2e" stroke-width="1"/>
<path d="M1350.8 82.9 h7.6 l-3.8 4.2 z" fill="#f0f0f0"/>
<rect x="1181.5" y="97.5" width="179" height="21" fill="url(#ddg)" stroke="#2e2e2e" stroke-width="1"/>
<path d="M1350.8 106.4 h7.6 l-3.8 4.2 z" fill="#f0f0f0"/>
<rect x="1194" y="53.6" width="16" height="15" fill="#ffffff"/>
<text x="1220.0" y="64.7" font-family='"Liberation Sans",sans-serif' font-size="12" fill="#ececec" textLength="41.4" lengthAdjust="spacingAndGlyphs" >ByLayer</text>
<path d="M1185.2 83.6 H1249.4 M1185.2 107.8 H1249.4" stroke="#f0f0f0" stroke-width="1"/>
<text x="1251.3" y="87.7" font-family='"Liberation Sans",sans-serif' font-size="12" fill="#ececec" textLength="40.4" lengthAdjust="spacingAndGlyphs" >ByLayer</text>
<text x="1251.3" y="111.8" font-family='"Liberation Sans",sans-serif' font-size="12" fill="#ececec" textLength="46.5" lengthAdjust="spacingAndGlyphs" >BYLAYER</text>
<path d="M1374 55.6 H1370 V82.4 H1374 M1386.4 70.4 H1390 V82.4 H1386" stroke="#e8e8e8" stroke-width="1.6" fill="none"/>
<rect x="1374.4" y="59.6" width="9.4" height="7" fill="#5cb4f4"/><circle cx="1379" cy="74.6" r="4.6" fill="#8a8a8a" stroke="#b0b0b0" stroke-width="1.4"/>
<path d="M1391.4 60.6 L1397.9 61.9" stroke="#f4c66c" stroke-width="1.8"/>
<path d="M1391.4 60.6 L1395.0 66.1" stroke="#f4c66c" stroke-width="1.8"/>
<path d="M1391.4 60.6 L1390.1 67.1" stroke="#f4c66c" stroke-width="1.8"/>
<path d="M1391.4 60.6 L1385.9 64.2" stroke="#f4c66c" stroke-width="1.8"/>
<path d="M1391.4 60.6 L1384.9 59.3" stroke="#f4c66c" stroke-width="1.8"/>
<path d="M1391.4 60.6 L1387.8 55.1" stroke="#f4c66c" stroke-width="1.8"/>
<path d="M1391.4 60.6 L1392.7 54.1" stroke="#f4c66c" stroke-width="1.8"/>
<path d="M1391.4 60.6 L1396.9 57.0" stroke="#f4c66c" stroke-width="1.8"/>
<circle cx="1391.4" cy="60.6" r="3" fill="#f4c66c"/>
<text x="1369.5" y="98.8" font-family='"Liberation Sans",sans-serif' font-size="12" fill="#ececec" textLength="32.1" lengthAdjust="spacingAndGlyphs" >Group</text>
<rect x="1412.6" y="55.6" width="5" height="4" stroke="#5cb4f4" stroke-width="1" fill="none"/><circle cx="1415" cy="64.6" r="2.4" stroke="#b8b8b8" stroke-width="1" fill="none"/><path d="M1421 54 H1423 V67 H1421" stroke="#e0e0e0" stroke-width="1" fill="none"/><path d="M1419.6 58 l5.6 5.6 m0 -5.6 l-5.6 5.6" stroke="#e85a6a" stroke-width="1.4"/>
<path d="M1413 78 H1411 V91 H1413 M1418.6 78 H1420.6 V84" stroke="#e0e0e0" stroke-width="1" fill="none"/><rect x="1413.6" y="80" width="4.6" height="3.6" stroke="#5cb4f4" stroke-width="1" fill="none"/><circle cx="1415.6" cy="88" r="2.2" stroke="#b8b8b8" stroke-width="1" fill="none"/><path d="M1418.6 90.6 L1423 85 L1425.4 87 L1421 92.4 Z" fill="#f4c66c"/><path d="M1418.6 90.6 L1421 92.4 L1418 93 Z" fill="#f0f0f0"/><path d="M1423 85 L1424 83.8 L1426.4 85.8 L1425.4 87 Z" fill="#e85a5a"/>
<rect x="1406.4" y="98.8" width="23.2" height="20.4" fill="url(#selb)" stroke="#2a3f86" stroke-width="1"/>
<path d="M1412.6 102 H1410.6 V115 H1412.6 M1417.6 102 H1419.6 V104" stroke="#f0f0f0" stroke-width="1.1" fill="none"/><rect x="1413.2" y="104" width="4" height="3.4" stroke="#58c878" stroke-width="1" fill="none"/><circle cx="1415" cy="111.6" r="2" stroke="#58c878" stroke-width="1" fill="none"/>
<path d="M1419 104.6 V116 L1421.6 113.6 L1423.6 118 L1425.4 117 L1423.4 112.8 L1427 112.4 Z" fill="#ffffff" stroke="#2a3a6a" stroke-width="0.5"/>
<path d="M1455.4 60 V69 M1483 60 V69 M1458 64.4 H1480.6" stroke="#e2e2e2" stroke-width="1.1"/><path d="M1456.4 64.4 l3.6 -2 v4 z M1482 64.4 l-3.6 -2 v4 z" fill="#e2e2e2"/>
<rect x="1455" y="70.4" width="28.4" height="5.6" fill="#f4c66c"/>
<rect x="1457.4" y="70.4" width="1" height="2.6" fill="#7a6030"/>
<rect x="1460.4" y="70.4" width="1" height="2.6" fill="#7a6030"/>
<rect x="1463.4" y="70.4" width="1" height="2.6" fill="#7a6030"/>
<rect x="1466.4" y="70.4" width="1" height="2.6" fill="#7a6030"/>
<rect x="1469.4" y="70.4" width="1" height="2.6" fill="#7a6030"/>
<rect x="1472.4" y="70.4" width="1" height="2.6" fill="#7a6030"/>
<rect x="1475.4" y="70.4" width="1" height="2.6" fill="#7a6030"/>
<rect x="1478.4" y="70.4" width="1" height="2.6" fill="#7a6030"/>
<rect x="1481.4" y="70.4" width="1" height="2.6" fill="#7a6030"/>
<text x="1446.0" y="98.8" font-family='"Liberation Sans",sans-serif' font-size="12" fill="#ececec" textLength="45.6" lengthAdjust="spacingAndGlyphs" >Measure</text>
<path d="M1466.1 105.1 h5.0 l-2.5 3.0 z" fill="#e2e2e2"/>
<path d="M1507.4 56.6 V67.6 L1510 65.4 L1512 69.4 L1513.6 68.6 L1511.6 64.8 L1515 64.4 Z" fill="#f4f4f4"/><rect x="1514.6" y="60.6" width="8.6" height="8.4" fill="#f0f0f0"/><path d="M1516 63 H1522 M1516 65.4 H1522 M1516 67.6 H1522" stroke="#3d7ac4" stroke-width="1"/><path d="M1516 52.6 l-3 4.2 h2.4 l-1.6 3.6 l4.6 -5 h-2.4 l2 -2.8 z" fill="#f4c040"/>
<rect x="1507.6" y="77.6" width="14" height="14" rx="1.6" stroke="#8ce0b0" stroke-width="1.1" stroke-dasharray="2 1.2" fill="none"/><path d="M1510 80.4 H1516 V83 H1519.6 V89.6 H1513 V86.6 H1510 Z" fill="#8cd0a8"/><path d="M1516.6 82 V92.6 L1519 90.4 L1520.8 94.4 L1522.4 93.6 L1520.6 89.8 L1524 89.6 Z" fill="#f4f4f4" stroke="#4a4a4a" stroke-width="0.4"/>
<rect x="1509.4" y="101.4" width="11.6" height="15.4" fill="#d8d8d8"/><rect x="1511" y="103" width="8.4" height="3" fill="#5c5c5c"/>
<rect x="1511.0" y="107.4" width="2" height="2" fill="#5c5c5c"/>
<rect x="1514.2" y="107.4" width="2" height="2" fill="#5c5c5c"/>
<rect x="1517.4" y="107.4" width="2" height="2" fill="#5c5c5c"/>
<rect x="1511.0" y="110.4" width="2" height="2" fill="#5c5c5c"/>
<rect x="1514.2" y="110.4" width="2" height="2" fill="#5c5c5c"/>
<rect x="1517.4" y="110.4" width="2" height="2" fill="#5c5c5c"/>
<rect x="1511.0" y="113.4" width="2" height="2" fill="#5c5c5c"/>
<rect x="1514.2" y="113.4" width="2" height="2" fill="#5c5c5c"/>
<rect x="1517.4" y="113.4" width="2" height="2" fill="#5c5c5c"/>
<rect x="1544" y="55.4" width="22" height="24.6" fill="#e8b468"/><rect x="1551" y="52.6" width="8" height="4.4" rx="1" fill="#e8e8e8"/><path d="M1552 62.4 H1566 L1570.2 66.6 V84.2 H1552 Z" fill="#dedede"/><path d="M1566 62.4 V66.6 H1570.2 Z" fill="#f8f8f8"/>
<text x="1543.2" y="98.8" font-family='"Liberation Sans",sans-serif' font-size="12" fill="#ececec" textLength="28.3" lengthAdjust="spacingAndGlyphs" >Paste</text>
<path d="M1555.1 105.1 h5.0 l-2.5 3.0 z" fill="#e2e2e2"/>
<rect x="1587" y="53" width="11.6" height="13.6" fill="#cacaca"/><path d="M1589 56 H1596 M1589 59 H1596 M1589 62 H1594" stroke="#5a5a5a" stroke-width="1"/><path d="M1594 57 L1601 66 M1602 57 L1596 65" stroke="#f0f0f0" stroke-width="1.3"/><circle cx="1595.4" cy="67.4" r="1.7" stroke="#f0f0f0" stroke-width="1" fill="none"/><circle cx="1601" cy="67.4" r="1.7" stroke="#f0f0f0" stroke-width="1" fill="none"/>
<path d="M1588.4 77 H1594.6 V89 H1588.4 Z" fill="#b8b8b8"/><path d="M1591.4 80.6 H1598 L1601 83.6 V93 H1591.4 Z" fill="#d8d8d8"/>
<path d="M1624.8 56 H1639 V65.8 H1657.2 V80 H1624.8 Z" fill="#e0e0e0"/>
<text x="1629.5" y="98.8" font-family='"Liberation Sans",sans-serif' font-size="12" fill="#ececec" textLength="23.8" lengthAdjust="spacingAndGlyphs" >Base</text>
<path d="M1638.9 105.1 h5.0 l-2.5 3.0 z" fill="#e2e2e2"/>
</svg>
</div>
<div class="r doctabs" style="top:141px;height:32px">
<svg width="1913" height="32" viewBox="0 141 1913 32">
<defs><linearGradient id="tabg" x1="0" y1="0" x2="0" y2="1"><stop offset="0" stop-color="#585858"/><stop offset="1" stop-color="#4a4a4a"/></linearGradient>
<linearGradient id="tabact" x1="0" y1="0" x2="0" y2="1"><stop offset="0" stop-color="#767676"/><stop offset="1" stop-color="#5a5a5a"/></linearGradient></defs>
<rect x="0" y="141" width="1913" height="2" fill="#2b2b2b"/>
<rect x="0" y="143" width="1913" height="1.3" fill="#7a7a7a"/>
<rect x="0" y="168.6" width="1913" height="4.7" fill="#585858"/>
<path d="M15.7 169 C23.7 169 18.7 147.8 27.7 147.8 H138.9 C146.9 148 146.9 163 139.9 169 Z" fill="url(#tabg)"/>
<path d="M27.7 148.2 H138.9" stroke="#6a6a6a" stroke-width="0.9" fill="none"/>
<path d="M138.5 169 C146.5 169 141.5 147.8 150.5 147.8 H262.0 C270.0 148 270.0 163 263.0 169 Z" fill="url(#tabg)"/>
<path d="M150.5 148.2 H262.0" stroke="#6a6a6a" stroke-width="0.9" fill="none"/>
<path d="M261.6 169 C269.6 169 264.6 147.8 273.6 147.8 H385.1 C393.1 148 393.1 163 386.1 169 Z" fill="url(#tabg)"/>
<path d="M273.6 148.2 H385.1" stroke="#6a6a6a" stroke-width="0.9" fill="none"/>
<path d="M384.7 169 C392.7 169 387.7 147.8 396.7 147.8 H507.9 C515.9 148 515.9 163 508.9 169 Z" fill="url(#tabg)"/>
<path d="M396.7 148.2 H507.9" stroke="#6a6a6a" stroke-width="0.9" fill="none"/>
<path d="M507.5 169 C515.5 169 510.5 147.8 519.5 147.8 H631.4 C639.4 148 639.4 163 632.4 169 Z" fill="url(#tabg)"/>
<path d="M519.5 148.2 H631.4" stroke="#6a6a6a" stroke-width="0.9" fill="none"/>
<path d="M631.0 169 C639.0 169 634.0 147.8 643.0 147.8 H754.5 C762.5 148 762.5 163 755.5 169 Z" fill="url(#tabg)"/>
<path d="M643.0 148.2 H754.5" stroke="#6a6a6a" stroke-width="0.9" fill="none"/>
<path d="M754.1 169 C762.1 169 757.1 147.8 766.1 147.8 H877.3 C885.3 148 885.3 163 878.3 169 Z" fill="url(#tabg)"/>
<path d="M766.1 148.2 H877.3" stroke="#6a6a6a" stroke-width="0.9" fill="none"/>
<path d="M876.9 169 C884.9 169 879.9 147.8 888.9 147.8 H1000.4 C1008.4 148 1008.4 163 1001.4 169 Z" fill="url(#tabg)"/>
<path d="M888.9 148.2 H1000.4" stroke="#6a6a6a" stroke-width="0.9" fill="none"/>
<path d="M1000.0 169 C1008.0 169 1003.0 147.8 1012.0 147.8 H1123.2 C1131.2 148 1131.2 163 1124.2 169 Z" fill="url(#tabg)"/>
<path d="M1012.0 148.2 H1123.2" stroke="#6a6a6a" stroke-width="0.9" fill="none"/>
<path d="M1122.8 169 C1130.8 169 1125.8 147.8 1134.8 147.8 H1246.5 C1254.5 148 1254.5 163 1247.5 169 Z" fill="url(#tabg)"/>
<path d="M1134.8 148.2 H1246.5" stroke="#6a6a6a" stroke-width="0.9" fill="none"/>
<path d="M1246.1 169 C1254.1 169 1249.1 147.8 1258.1 147.8 H1369.2 C1377.2 148 1377.2 163 1370.2 169 Z" fill="url(#tabg)"/>
<path d="M1258.1 148.2 H1369.2" stroke="#6a6a6a" stroke-width="0.9" fill="none"/>
<path d="M1368.8 169 C1376.8 169 1371.8 147.8 1380.8 147.8 H1505.4 C1513.4 148 1513.4 163 1506.4 169 Z" fill="url(#tabg)"/>
<path d="M1380.8 148.2 H1505.4" stroke="#6a6a6a" stroke-width="0.9" fill="none"/>
<path d="M1505.0 169 C1513.0 169 1508.0 147.8 1517.0 147.8 H1632.6 C1640.6 148 1640.6 163 1633.6 169 Z" fill="url(#tabg)"/>
<path d="M1517.0 148.2 H1632.6" stroke="#6a6a6a" stroke-width="0.9" fill="none"/>
<path d="M1632.2 169 C1640.2 169 1635.2 147.8 1644.2 147.8 H1755.7 C1763.7 148 1763.7 163 1756.7 169 Z" fill="url(#tabg)"/>
<path d="M1644.2 148.2 H1755.7" stroke="#6a6a6a" stroke-width="0.9" fill="none"/>
<path d="M1759.1 173.3 V169 C1768.1 169 1764.1 147.8 1773.1 147.8 H1887.2 C1895.2 147.8 1891.2 169 1900.2 169 V173.3 Z" fill="url(#tabact)"/>
<path d="M1773.1 148.2 H1887.2" stroke="#8e8e8e" stroke-width="0.9" fill="none"/>
<text x="32.1" y="162.6" font-family='"Liberation Sans",sans-serif' font-size="12" fill="#c4cad6" textLength="24.1" lengthAdjust="spacingAndGlyphs" >Start</text>
<text x="154.9" y="162.6" font-family='"Liberation Sans",sans-serif' font-size="12" fill="#c4cad6" textLength="48.2" lengthAdjust="spacingAndGlyphs" >Int-Sofa2</text>
<path d="M248.0 155.6 l6 6 m0 -6 l-6 6" stroke="#333333" stroke-width="1.5" fill="none"/>
<text x="278.0" y="162.6" font-family='"Liberation Sans",sans-serif' font-size="12" fill="#c4cad6" textLength="48.2" lengthAdjust="spacingAndGlyphs" >Int-Sofa3</text>
<path d="M371.0 155.6 l6 6 m0 -6 l-6 6" stroke="#333333" stroke-width="1.5" fill="none"/>
<text x="401.1" y="162.6" font-family='"Liberation Sans",sans-serif' font-size="12" fill="#c4cad6" textLength="55.6" lengthAdjust="spacingAndGlyphs" >Int-Vanity*</text>
<path d="M494.0 155.6 l6 6 m0 -6 l-6 6" stroke="#333333" stroke-width="1.5" fill="none"/>
<text x="523.9" y="162.6" font-family='"Liberation Sans",sans-serif' font-size="12" fill="#c4cad6" textLength="61.6" lengthAdjust="spacingAndGlyphs" >Int-Vanity-1</text>
<path d="M617.0 155.6 l6 6 m0 -6 l-6 6" stroke="#333333" stroke-width="1.5" fill="none"/>
<text x="647.4" y="162.6" font-family='"Liberation Sans",sans-serif' font-size="12" fill="#c4cad6" textLength="56.2" lengthAdjust="spacingAndGlyphs" >Int-Vanity2</text>
<path d="M740.0 155.6 l6 6 m0 -6 l-6 6" stroke="#333333" stroke-width="1.5" fill="none"/>
<text x="770.5" y="162.6" font-family='"Liberation Sans",sans-serif' font-size="12" fill="#c4cad6" textLength="68.6" lengthAdjust="spacingAndGlyphs" >Int-Vanity3d*</text>
<path d="M863.0 155.6 l6 6 m0 -6 l-6 6" stroke="#333333" stroke-width="1.5" fill="none"/>
<text x="893.3" y="162.6" font-family='"Liberation Sans",sans-serif' font-size="12" fill="#c4cad6" textLength="44.5" lengthAdjust="spacingAndGlyphs" >Kitchen*</text>
<path d="M986.0 155.6 l6 6 m0 -6 l-6 6" stroke="#333333" stroke-width="1.5" fill="none"/>
<text x="1016.4" y="162.6" font-family='"Liberation Sans",sans-serif' font-size="12" fill="#c4cad6" textLength="66.9" lengthAdjust="spacingAndGlyphs" >KURSI SOFA*</text>
<path d="M1109.0 155.6 l6 6 m0 -6 l-6 6" stroke="#333333" stroke-width="1.5" fill="none"/>
<text x="1139.2" y="162.6" font-family='"Liberation Sans",sans-serif' font-size="12" fill="#c4cad6" textLength="72.9" lengthAdjust="spacingAndGlyphs" >Lemari Kulkas</text>
<path d="M1232.0 155.6 l6 6 m0 -6 l-6 6" stroke="#333333" stroke-width="1.5" fill="none"/>
<text x="1262.5" y="162.6" font-family='"Liberation Sans",sans-serif' font-size="12" fill="#c4cad6" textLength="67.2" lengthAdjust="spacingAndGlyphs" >Lemari Linen</text>
<path d="M1355.1 155.6 l6 6 m0 -6 l-6 6" stroke="#333333" stroke-width="1.5" fill="none"/>
<text x="1385.2" y="162.6" font-family='"Liberation Sans",sans-serif' font-size="12" fill="#c4cad6" textLength="95.3" lengthAdjust="spacingAndGlyphs" >LEMARI LOCKER 2</text>
<path d="M1491.4 155.6 l6 6 m0 -6 l-6 6" stroke="#333333" stroke-width="1.5" fill="none"/>
<text x="1521.4" y="162.6" font-family='"Liberation Sans",sans-serif' font-size="12" fill="#c4cad6" textLength="86.3" lengthAdjust="spacingAndGlyphs" >LEMARI LOCKER</text>
<path d="M1618.2 155.6 l6 6 m0 -6 l-6 6" stroke="#333333" stroke-width="1.5" fill="none"/>
<text x="1648.6" y="162.6" font-family='"Liberation Sans",sans-serif' font-size="12" fill="#c4cad6" textLength="64.1" lengthAdjust="spacingAndGlyphs" >Lemari Obat</text>
<path d="M1740.9 155.6 l6 6 m0 -6 l-6 6" stroke="#333333" stroke-width="1.5" fill="none"/>
<text x="1771.7" y="162.6" font-family='"Liberation Sans",sans-serif' font-size="12" fill="#f2f2f2" textLength="91.8" lengthAdjust="spacingAndGlyphs" >LEMARI PAKAIAN</text>
<path d="M1874.4 155.6 l6 6 m0 -6 l-6 6" stroke="#404040" stroke-width="1.5" fill="none"/>
<path d="M1899 151.6 H1913 V168 H1910 C1903 168 1902 156 1899 151.6 Z" fill="#4c4c4c"/>
<path d="M1902.6 159.4 H1911.4 M1907 155 V163.8" stroke="#c4c8c8" stroke-width="2.2" fill="none"/>
</svg>
</div>
<div class="r canvas" style="top:173px;height:830px">
<svg width="1913" height="830" viewBox="0 173 1913 830">
<g fill="none" shape-rendering="crispEdges" stroke-width="1">
<rect x="641.5" y="298.5" width="461" height="534" stroke="#00f000"/>
<path d="M654.5 311 V832 M1089.5 311 V832" stroke="#00f000"/>
<path d="M654 311 H1090" stroke="#12a41e" stroke-width="2"/>
<path d="M655 692.5 H799 M945 692.5 H1089" stroke="#00f000"/>
<path d="M655 807.5 H1089" stroke="#00f000" stroke-width="1"/>
</g>
<g stroke="#6f6f6f" stroke-width="1" fill="none">
<path d="M655.80 693.5 V806"/>
<path d="M668.52 693.5 V806"/>
<path d="M681.24 693.5 V806"/>
<path d="M693.96 693.5 V806"/>
<path d="M706.68 693.5 V806"/>
<path d="M719.40 693.5 V806"/>
<path d="M732.12 693.5 V806"/>
<path d="M744.84 693.5 V806"/>
<path d="M757.56 693.5 V806"/>
<path d="M770.28 693.5 V806"/>
<path d="M783.00 693.5 V806"/>
<path d="M795.72 693.5 V806"/>
<path d="M948.40 693.5 V806"/>
<path d="M961.12 693.5 V806"/>
<path d="M973.84 693.5 V806"/>
<path d="M986.56 693.5 V806"/>
<path d="M999.28 693.5 V806"/>
<path d="M1012.00 693.5 V806"/>
<path d="M1024.72 693.5 V806"/>
<path d="M1037.44 693.5 V806"/>
<path d="M1050.16 693.5 V806"/>
<path d="M1062.88 693.5 V806"/>
<path d="M1075.60 693.5 V806"/>
<path d="M1088.32 693.5 V806"/>
</g>
<g fill="none" stroke-width="1" shape-rendering="crispEdges">
<path d="M799.5 311 V807 M944.5 311 V807" stroke="#e87474"/>
<path d="M799 310.5 H945" stroke="#d88a6a"/>
<path d="M799 311.5 H945" stroke="#8f8f86" stroke-dasharray="1 1"/>
<path d="M800 807.5 H944" stroke="#c89058"/>
<rect x="837.5" y="349.5" width="69" height="420" stroke="#94484a"/>
<rect x="842.5" y="354.5" width="59" height="410" stroke="#bd5a5a"/>
<rect x="787.5" y="531.5" width="3" height="69" stroke="#8a4444"/>
<rect x="953.5" y="531.5" width="3" height="69" stroke="#8a4444"/>
</g>
<clipPath id="mir"><rect x="843" y="355" width="58" height="409"/></clipPath>
<g clip-path="url(#mir)" stroke="#8c857c" stroke-width="0.9" fill="none">
<path d="M842.5 353.7 L901.5 296.2"/>
<path d="M842.5 362.3 L901.5 304.8"/>
<path d="M842.5 370.9 L901.5 313.4"/>
<path d="M842.5 421.3 L901.5 363.8"/>
<path d="M842.5 429.9 L901.5 372.4"/>
<path d="M842.5 438.5 L901.5 381.0"/>
<path d="M842.5 488.9 L901.5 431.4"/>
<path d="M842.5 497.5 L901.5 440.0"/>
<path d="M842.5 506.1 L901.5 448.6"/>
<path d="M842.5 556.5 L901.5 499.0"/>
<path d="M842.5 565.1 L901.5 507.6"/>
<path d="M842.5 573.7 L901.5 516.2"/>
<path d="M842.5 624.1 L901.5 566.6"/>
<path d="M842.5 632.7 L901.5 575.2"/>
<path d="M842.5 641.3 L901.5 583.8"/>
<path d="M842.5 691.7 L901.5 634.2"/>
<path d="M842.5 700.3 L901.5 642.8"/>
<path d="M842.5 708.9 L901.5 651.4"/>
<path d="M842.5 759.3 L901.5 701.8"/>
<path d="M842.5 767.9 L901.5 710.4"/>
<path d="M842.5 776.5 L901.5 719.0"/>
<path d="M842.5 826.9 L901.5 769.4"/>
<path d="M842.5 835.5 L901.5 778.0"/>
<path d="M842.5 844.1 L901.5 786.6"/>
</g>
<g stroke="#7c3e3e" stroke-width="1" fill="none">
<path d="M631 862.9 H1113 M636 883.4 H1108"/>
<path d="M1126.6 288 V838 M1155.5 290 V838"/>
<path d="M641.5 855 V868"/>
<path d="M654.5 855 V868"/>
<path d="M799.4 855 V868"/>
<path d="M944.5 855 V868"/>
<path d="M1089.6 855 V868"/>
<path d="M1102.5 855 V868"/>
<path d="M641.5 875 V888"/>
<path d="M1102.5 875 V888"/>
<path d="M1118 298.4 H1132"/>
<path d="M1118 310.9 H1132"/>
<path d="M1118 692.7 H1132"/>
<path d="M1118 807.0 H1132"/>
<path d="M1118 832.3 H1132"/>
<path d="M1143 298.4 H1161"/>
<path d="M1143 832.3 H1161"/>
</g>
<g fill="#d02020">
<rect x="641.0" y="849.9" width="1" height="1"/>
<rect x="654.0" y="849.9" width="1" height="1"/>
<rect x="798.9" y="849.9" width="1" height="1"/>
<rect x="944.0" y="849.9" width="1" height="1"/>
<rect x="1089.1" y="849.9" width="1" height="1"/>
<rect x="1102.0" y="849.9" width="1" height="1"/>
<rect x="641.0" y="871.0" width="1" height="1"/>
<rect x="1102.0" y="871.0" width="1" height="1"/>
<rect x="1109.8" y="297.9" width="1" height="1"/>
<rect x="1109.8" y="310.4" width="1" height="1"/>
<rect x="1109.8" y="692.2" width="1" height="1"/>
<rect x="1109.8" y="806.5" width="1" height="1"/>
<rect x="1109.8" y="831.8" width="1" height="1"/>
<rect x="1138.0" y="297.9" width="1" height="1"/>
<rect x="1138.0" y="831.8" width="1" height="1"/>
</g>
<g stroke="#f4f400" fill="none">
<path d="M635.9 862.9 H646.9" stroke-width="1"/>
<path d="M637.1 867.1 L645.9 858.7" stroke-width="2.5"/>
<path d="M648.9 862.9 H659.9" stroke-width="1"/>
<path d="M650.1 867.1 L658.9 858.7" stroke-width="2.5"/>
<path d="M793.8 862.9 H804.8" stroke-width="1"/>
<path d="M795.0 867.1 L803.8 858.7" stroke-width="2.5"/>
<path d="M938.9 862.9 H949.9" stroke-width="1"/>
<path d="M940.1 867.1 L948.9 858.7" stroke-width="2.5"/>
<path d="M1084.0 862.9 H1095.0" stroke-width="1"/>
<path d="M1085.2 867.1 L1094.0 858.7" stroke-width="2.5"/>
<path d="M1096.9 862.9 H1107.9" stroke-width="1"/>
<path d="M1098.1 867.1 L1106.9 858.7" stroke-width="2.5"/>
<path d="M635.9 883.4 H646.9" stroke-width="1"/>
<path d="M637.1 887.6 L645.9 879.2" stroke-width="2.5"/>
<path d="M1096.9 883.4 H1107.9" stroke-width="1"/>
<path d="M1098.1 887.6 L1106.9 879.2" stroke-width="2.5"/>
<path d="M1126.6 293.0 V303.8" stroke-width="1"/>
<path d="M1122.4 294.0 L1130.8 302.8" stroke-width="2.5"/>
<path d="M1126.6 305.5 V316.3" stroke-width="1"/>
<path d="M1122.4 306.5 L1130.8 315.3" stroke-width="2.5"/>
<path d="M1126.6 687.3 V698.1" stroke-width="1"/>
<path d="M1122.4 688.3 L1130.8 697.1" stroke-width="2.5"/>
<path d="M1126.6 801.6 V812.4" stroke-width="1"/>
<path d="M1122.4 802.6 L1130.8 811.4" stroke-width="2.5"/>
<path d="M1126.6 826.9 V837.7" stroke-width="1"/>
<path d="M1122.4 827.9 L1130.8 836.7" stroke-width="2.5"/>
<path d="M1155.5 293.0 V303.8" stroke-width="1"/>
<path d="M1151.3 294.0 L1159.7 302.8" stroke-width="2.5"/>
<path d="M1155.5 826.9 V837.7" stroke-width="1"/>
<path d="M1151.3 827.9 L1159.7 836.7" stroke-width="2.5"/>
</g>
<text x="641.0" y="857.6" font-family='"Liberation Sans",sans-serif' font-size="18" fill="#e6e61a" textLength="14.0" lengthAdjust="spacingAndGlyphs">50</text>
<text x="716.4" y="857.6" font-family='"Liberation Sans",sans-serif' font-size="18" fill="#e6e61a" textLength="21.2" lengthAdjust="spacingAndGlyphs">570</text>
<text x="861.0" y="857.6" font-family='"Liberation Sans",sans-serif' font-size="18" fill="#e6e61a" textLength="21.6" lengthAdjust="spacingAndGlyphs">570</text>
<text x="1006.2" y="857.6" font-family='"Liberation Sans",sans-serif' font-size="18" fill="#e6e61a" textLength="21.2" lengthAdjust="spacingAndGlyphs">570</text>
<text x="1088.6" y="857.6" font-family='"Liberation Sans",sans-serif' font-size="18" fill="#e6e61a" textLength="14.0" lengthAdjust="spacingAndGlyphs">50</text>
<text x="860.0" y="879.2" font-family='"Liberation Sans",sans-serif' font-size="18" fill="#e6e61a" textLength="24.3" lengthAdjust="spacingAndGlyphs">1810</text>
<text transform="translate(1123.6 310.4) rotate(-90)" x="0" y="0" font-family='"Liberation Sans",sans-serif' font-size="18" fill="#e6e61a" textLength="13.7" lengthAdjust="spacingAndGlyphs">50</text>
<text transform="translate(1122.0 515.3) rotate(-90)" x="0" y="0" font-family='"Liberation Sans",sans-serif' font-size="18" fill="#e6e61a" textLength="26.6" lengthAdjust="spacingAndGlyphs">1500</text>
<text transform="translate(1151.0 578.7) rotate(-90)" x="0" y="0" font-family='"Liberation Sans",sans-serif' font-size="18" fill="#e6e61a" textLength="26.5" lengthAdjust="spacingAndGlyphs">2100</text>
<text transform="translate(1122.2 761.3) rotate(-90)" x="0" y="0" font-family='"Liberation Sans",sans-serif' font-size="18" fill="#e6e61a" textLength="22.7" lengthAdjust="spacingAndGlyphs">450</text>
<text transform="translate(1125.4 828.8) rotate(-90)" x="0" y="0" font-family='"Liberation Sans",sans-serif' font-size="18" fill="#e6e61a" textLength="19.4" lengthAdjust="spacingAndGlyphs">100</text>
<text x="639.0" y="913.7" font-family='"Liberation Sans",sans-serif' font-size="15.2" fill="#1fe4e4" textLength="122.4" lengthAdjust="spacingAndGlyphs" >LEMARI PAKAIAN</text>
<text x="639.0" y="927.2" font-family='"Liberation Sans",sans-serif' font-size="15.2" fill="#46b4e0" textLength="74.0" lengthAdjust="spacingAndGlyphs" >KT UTAMA</text>
<path d="M639 932.9 H781.5" stroke="#4aa4d0" stroke-width="1.8"/>
<text x="733.0" y="941.6" font-family='"Liberation Sans",sans-serif' font-size="9.6" fill="#1fd8e0" textLength="48.5" lengthAdjust="spacingAndGlyphs" >skala  1 : 20</text>
<text x="3.6" y="190.6" font-family='"Liberation Sans",sans-serif' font-size="12" fill="#e4e4e4" textLength="123.7" lengthAdjust="spacingAndGlyphs" >[−][Top][2D Wireframe]</text>
<g stroke="#f2f2f2" fill="none">
<path d="M1852 190.5 H1860" stroke-width="2.4"/>
<rect x="1872" y="185.5" width="6" height="6" stroke-width="1.6"/><path d="M1874.5 184 H1880.5 V190" stroke-width="1.4"/>
<path d="M1891 184 L1899 192 M1899 184 L1891 192" stroke-width="2.2"/>
</g>
<g stroke="#e8e8e8" stroke-width="1" fill="none" shape-rendering="crispEdges">
<path d="M20.5 932 V982.5 H71"/><rect x="16.5" y="977.5" width="9" height="9"/>
</g>
<g stroke="#e8e8e8" stroke-width="1.1" fill="none">
<path d="M22 915.5 L28.5 922.5 L35 915.5 M28.5 922.5 V928.5"/>
<path d="M75.5 968.5 L88 981.5 M88 968.5 L75.5 981.5"/>
</g>
<circle cx="1829" cy="278.7" r="53.4" fill="none" stroke="#444a52" stroke-width="12.8"/>
<rect x="1803.2" y="252.9" width="51.6" height="52" fill="#aeb6b4"/>
<rect x="1813" y="263.2" width="32" height="32" fill="#a7abb0"/>
<text x="1818.4" y="283.1" font-family='"Liberation Sans",sans-serif' font-size="12.5" fill="#54585c" font-weight="bold" textLength="22.2" lengthAdjust="spacingAndGlyphs" >TOP</text>
<text x="1822.2" y="230.1" font-family='"Liberation Sans",sans-serif' font-size="21" fill="#b4b4b8" font-weight="bold" textLength="13.6" lengthAdjust="spacingAndGlyphs" >N</text>
<text x="1822.3" y="341.9" font-family='"Liberation Sans",sans-serif' font-size="21" fill="#b4b4b8" font-weight="bold" textLength="13.4" lengthAdjust="spacingAndGlyphs" >S</text>
<text x="1763.1" y="286.5" font-family='"Liberation Sans",sans-serif' font-size="21" fill="#b4b4b8" font-weight="bold" textLength="19.0" lengthAdjust="spacingAndGlyphs" >W</text>
<text x="1879.2" y="286.5" font-family='"Liberation Sans",sans-serif' font-size="21" fill="#b4b4b8" font-weight="bold" textLength="12.4" lengthAdjust="spacingAndGlyphs" >E</text>
<rect x="1805.2" y="366.4" width="47.4" height="17.2" rx="3.5" fill="#a2a2a2" stroke="#8a8a8a" stroke-width="1"/>
<text x="1810.0" y="378.5" font-family='"Liberation Sans",sans-serif' font-size="11.5" fill="#5c5c5c" textLength="23.0" lengthAdjust="spacingAndGlyphs" >WCS</text>
<path d="M1839.5 373 h7 l-3.5 4.2 z" fill="#8c8c8c" stroke="#c8c8c8" stroke-width="0.6"/>
<rect x="1876" y="409" width="32.2" height="211.8" rx="4" fill="#5a6068" stroke="#363c44" stroke-width="1"/>
<g stroke="#727880" fill="none" stroke-width="1.2">
<circle cx="1901.6" cy="414" r="3.2"/><path d="M1899.6 412 l4 4 m0 -4 l-4 4"/>
<circle cx="1901.6" cy="614.6" r="3.2"/><path d="M1899.6 614.6 h4"/>
<path d="M1892 428.5 H1902.5 V439 A10.5 10.5 0 1 1 1892 428.5 Z"/>
<circle cx="1892" cy="439" r="6.2"/><path d="M1887.5 444 Q1892 441 1896.5 444"/>
<path d="M1880 464.5 H1905 M1880 572.5 H1905" stroke="#666c74" stroke-width="1"/>
<path d="M1886 489 C1883 484 1880 482 1881.5 480.5 C1884 480 1886 483 1888 485 L1887 474 C1887 471.5 1889.6 471.5 1890 474 L1890.6 480 L1891 472 C1891.2 469.6 1893.8 469.6 1894 472 L1894.2 480 L1895.4 473.4 C1896 471 1898.4 471.6 1898.2 474 L1897.6 481 L1899.6 476.4 C1900.6 474.4 1902.8 475.4 1902.2 477.6 C1901 482 1901 487 1898 492 L1889 492 Z"/>
<path d="M1881 498.5 L1895 512.5 M1895 498.5 L1881 512.5 M1881 502.5 V498.5 H1885 M1891 498.5 H1895 V502.5 M1881 508.5 V512.5 H1885"/>
<circle cx="1896.5" cy="513" r="4.4"/><path d="M1899.8 516.4 L1903.5 520" stroke-width="2.4"/>
<ellipse cx="1892" cy="548" rx="10.6" ry="4.6"/><path d="M1889.6 556 V543 H1886.6 L1892 536.5 L1897.4 543 H1894.4 V556 Z" fill="#5a6068"/><path d="M1886 550.6 l-3.4 1.6 l3.6 2.2"/>
<rect x="1880.5" y="578.5" width="6" height="6"/><rect x="1888.8" y="578.5" width="6" height="6"/><rect x="1897" y="578.5" width="6" height="6"/>
<rect x="1880.5" y="587.5" width="16" height="12.6"/>
</g>
<path d="M1885.2 590.6 V597.4 L1892 594 Z" fill="#727880"/>
<path d="M1889.7 457.6 h5.0 l-2.5 2.8 z" fill="#727880"/>
<path d="M1889.7 528.0 h5.0 l-2.5 2.8 z" fill="#727880"/>
<path d="M1889.7 566.0 h5.0 l-2.5 2.8 z" fill="#727880"/>
<rect x="1912" y="173" width="1" height="830" fill="#f4f6fa"/>
<rect x="463" y="918.4" width="788.6" height="14.4" rx="2.5" fill="rgba(98,98,98,0.80)"/>
<rect x="463" y="938.4" width="60" height="14.4" rx="2.5" fill="rgba(98,98,98,0.80)"/>
<rect x="463" y="958.4" width="60" height="14.4" rx="2.5" fill="rgba(98,98,98,0.80)"/>
<text x="465.4" y="929.2" font-family='"Liberation Mono",monospace' font-size="11.7" fill="#d2d2d2" textLength="782.6" lengthAdjust="spacingAndGlyphs" xml:space="preserve">Autodesk DWG.  This file is a TrustedDWG last saved by an Autodesk application or Autodesk licensed application.</text>
<text x="465.4" y="949.2" font-family='"Liberation Mono",monospace' font-size="11.7" fill="#f0f0f0" textLength="55.6" lengthAdjust="spacingAndGlyphs" >Command:</text>
<text x="465.4" y="969.2" font-family='"Liberation Mono",monospace' font-size="11.7" fill="#f0f0f0" textLength="55.6" lengthAdjust="spacingAndGlyphs" >Command:</text>
<defs><linearGradient id="cmdg" x1="0" y1="0" x2="0" y2="1"><stop offset="0" stop-color="#4e4e4e"/><stop offset="1" stop-color="#2e2e2e"/></linearGradient></defs>
<path d="M403 1001.6 V980 Q403 976.6 406.4 976.6 H460 V1001.6 Z" fill="url(#cmdg)"/>
<rect x="457" y="976.6" width="1060.4" height="25" fill="#c1c1c1"/>
<rect x="457" y="976.6" width="1060.4" height="1" fill="#d6d6d6"/>
<rect x="407.0" y="979.6" width="1.2" height="1.2" fill="#9a9a9a"/>
<rect x="410.0" y="979.6" width="1.2" height="1.2" fill="#9a9a9a"/>
<rect x="407.0" y="982.0" width="1.2" height="1.2" fill="#9a9a9a"/>
<rect x="410.0" y="982.0" width="1.2" height="1.2" fill="#9a9a9a"/>
<rect x="407.0" y="984.4" width="1.2" height="1.2" fill="#9a9a9a"/>
<rect x="410.0" y="984.4" width="1.2" height="1.2" fill="#9a9a9a"/>
<rect x="407.0" y="986.8" width="1.2" height="1.2" fill="#9a9a9a"/>
<rect x="410.0" y="986.8" width="1.2" height="1.2" fill="#9a9a9a"/>
<rect x="407.0" y="989.2" width="1.2" height="1.2" fill="#9a9a9a"/>
<rect x="410.0" y="989.2" width="1.2" height="1.2" fill="#9a9a9a"/>
<rect x="407.0" y="991.6" width="1.2" height="1.2" fill="#9a9a9a"/>
<rect x="410.0" y="991.6" width="1.2" height="1.2" fill="#9a9a9a"/>
<rect x="407.0" y="994.0" width="1.2" height="1.2" fill="#9a9a9a"/>
<rect x="410.0" y="994.0" width="1.2" height="1.2" fill="#9a9a9a"/>
<rect x="407.0" y="996.4" width="1.2" height="1.2" fill="#9a9a9a"/>
<rect x="410.0" y="996.4" width="1.2" height="1.2" fill="#9a9a9a"/>
<rect x="407.0" y="998.8" width="1.2" height="1.2" fill="#9a9a9a"/>
<rect x="410.0" y="998.8" width="1.2" height="1.2" fill="#9a9a9a"/>
<path d="M419 985.8 L427.4 993.4 M427.4 985.8 L419 993.4" stroke="#e6e6e6" stroke-width="1.9" fill="none"/>
<path d="M443.4 988.4 L450.6 995.6" stroke="#e0e0e0" stroke-width="2.4" stroke-linecap="round" fill="none"/><path d="M442.6 983.4 A4 4 0 1 0 446.6 987.6 L443.6 987.8 L441.6 985.6 Z" fill="#e0e0e0"/>
<rect x="462.4" y="982.4" width="13.6" height="12.6" fill="#b2b2b2" stroke="#6e6e6e" stroke-width="1"/>
<path d="M465 985.6 l3.6 3 l-3.6 3 M470 992.4 h4" stroke="#3c3c3c" stroke-width="1.3" fill="none"/>
<path d="M480.3 987.1 h5.4 l-2.7 3.0 z" fill="#5a5a5a"/>
<text x="494.0" y="992.6" font-family='"Liberation Mono",monospace' font-size="11.7" fill="#7c7c7c" font-style="italic" textLength="96.6" lengthAdjust="spacingAndGlyphs" >Type a command</text>
<path d="M1506.4 991.6 h6.6 l-3.3 -3.6 z" fill="#1c1c1c"/>
</svg>
</div>
<div class="r statusbar" style="top:1003px;height:26px">
<svg width="1913" height="26" viewBox="0 1003 1913 26">
<rect x="0" y="1003" width="1913" height="1.2" fill="#2c2c2c"/>
<rect x="0" y="1002.8" width="1913" height="1" fill="#5a5a5a"/>
<defs><linearGradient id="ltab1" x1="0" y1="0" x2="0" y2="1"><stop offset="0" stop-color="#4e4e4e"/><stop offset="1" stop-color="#6c6c6c"/></linearGradient><linearGradient id="ltab2" x1="0" y1="0" x2="0" y2="1"><stop offset="0" stop-color="#484848"/><stop offset="1" stop-color="#585858"/></linearGradient></defs>
<path d="M69 1003.8 C75 1004 74 1020.6 81 1020.6 H125.6 C132 1020.6 132 1004 138 1003.8 Z" fill="url(#ltab2)"/>
<path d="M7.3 1003.8 C13.4 1004 13 1020.6 19.4 1020.6 H60.4 C67 1020.6 66.4 1004 73.2 1003.8 Z" fill="url(#ltab1)"/>
<path d="M139 1019.6 C143 1014 141 1004 148 1003.8 H161.6 C158 1010 159 1019.4 151 1019.6 Z" fill="#4c4c4c"/>
<text x="23.5" y="1016.0" font-family='"Liberation Sans",sans-serif' font-size="12.4" fill="#ffffff" font-weight="bold" textLength="34.5" lengthAdjust="spacingAndGlyphs" >Model</text>
<text x="81.0" y="1016.1" font-family='"Liberation Sans",sans-serif' font-size="12" fill="#c8c8c8" textLength="41.4" lengthAdjust="spacingAndGlyphs" >Layout1</text>
<path d="M146 1012.2 H153.6 M149.8 1008.4 V1016" stroke="#d4d4d4" stroke-width="1.8" fill="none"/>
<rect x="1357.4" y="1004.4" width="555.6" height="24.6" fill="#4f4f4f"/>
<rect x="1356.5" y="1004.4" width="1.8" height="24.6" fill="#363636"/>
<rect x="1405.0" y="1004.4" width="1.8" height="24.6" fill="#363636"/>
<rect x="1470.9" y="1004.4" width="1.8" height="24.6" fill="#363636"/>
<rect x="1639.5" y="1004.4" width="1.8" height="24.6" fill="#363636"/>
<rect x="1747.9" y="1004.4" width="1.8" height="24.6" fill="#363636"/>
<rect x="1788.1" y="1004.4" width="1.8" height="24.6" fill="#363636"/>
<rect x="1815.1" y="1004.4" width="1.8" height="24.6" fill="#363636"/>
<rect x="1842.1" y="1004.4" width="1.8" height="24.6" fill="#363636"/>
<rect x="1867.7" y="1004.4" width="1.8" height="24.6" fill="#363636"/>
<text x="1361.6" y="1021.1" font-family='"Liberation Sans",sans-serif' font-size="12" fill="#f0f0f0" textLength="39.8" lengthAdjust="spacingAndGlyphs" >MODEL</text>
<rect x="1499.3" y="1005.6" width="21.3" height="22.6" fill="#5b8fc6"/>
<rect x="1578.0" y="1005.6" width="21.4" height="22.6" fill="#5b8fc6"/>
<rect x="1602.0" y="1005.6" width="21.6" height="22.6" fill="#5b8fc6"/>
<rect x="1644.0" y="1005.6" width="21.5" height="22.6" fill="#5b8fc6"/>
<path d="M1412 1012.6 H1426.8 M1412 1016.6 H1426.8 M1412 1020.6 H1426.8 M1415.2 1009 V1024 M1419.4 1009 V1024 M1423.6 1009 V1024" stroke="#ececec" stroke-width="1.1" fill="none"/>
<rect x="1438.4" y="1011.0" width="1.8" height="1.8" fill="#ececec"/>
<rect x="1438.4" y="1015.8" width="1.8" height="1.8" fill="#ececec"/>
<rect x="1438.4" y="1020.6" width="1.8" height="1.8" fill="#ececec"/>
<rect x="1443.2" y="1011.0" width="1.8" height="1.8" fill="#ececec"/>
<rect x="1443.2" y="1015.8" width="1.8" height="1.8" fill="#ececec"/>
<rect x="1443.2" y="1020.6" width="1.8" height="1.8" fill="#ececec"/>
<rect x="1448.0" y="1011.0" width="1.8" height="1.8" fill="#ececec"/>
<rect x="1448.0" y="1015.8" width="1.8" height="1.8" fill="#ececec"/>
<rect x="1448.0" y="1020.6" width="1.8" height="1.8" fill="#ececec"/>
<path d="M1459.7 1015.2 h7.4 l-3.7 4.4 z" fill="#ececec"/>
<path d="M1479.4 1008.6 V1023.4 H1492 M1479.4 1018 H1484.4 V1023.4" stroke="#ececec" stroke-width="1.3" fill="none"/>
<circle cx="1508.6" cy="1017.6" r="6.2" stroke="#ececec" stroke-width="1.4" fill="none"/><path d="M1508.6 1017.6 L1518 1008.6 M1508.6 1017.6 H1519" stroke="#ececec" stroke-width="1.3" fill="none"/>
<path d="M1525.7 1015.2 h7.4 l-3.7 4.4 z" fill="#ececec"/>
<path d="M1548.4 1009 V1024.6" stroke="#84d8a0" stroke-width="1"/><path d="M1541.8 1009.8 L1555.4 1022.8" stroke="#e06060" stroke-width="1"/><rect x="1547" y="1015" width="2.8" height="2.8" fill="#4f4f4f" stroke="#f0f0f0" stroke-width="0.9"/>
<path d="M1564.5 1015.2 h7.4 l-3.7 4.4 z" fill="#ececec"/>
<path d="M1581.6 1024 H1597 M1582.6 1023.6 L1595.6 1010.4" stroke="#ececec" stroke-width="1.4" fill="none"/><rect x="1588" y="1016" width="2.6" height="2.6" fill="#ececec"/>
<rect x="1608" y="1012.4" width="12.4" height="12.4" stroke="#ececec" stroke-width="1.4" fill="none"/><rect x="1605.4" y="1009.6" width="5" height="5" fill="#5b8fc6" stroke="#ececec" stroke-width="1.2"/>
<path d="M1628.9 1015.2 h7.4 l-3.7 4.4 z" fill="#ececec"/>
<path d="M1652.6 1008 L1649.6 1020 L1645.2 1025.6 L1652.6 1021 L1660.0 1025.6 L1655.6 1020 Z" fill="#ffffff"/>
<circle cx="1660.4" cy="1010.6" r="2.2" stroke="#fff" stroke-width="1.1" fill="none"/>
<path d="M1676.8 1008 L1673.8 1020 L1669.4 1025.6 L1676.8 1021 L1684.2 1025.6 L1679.8 1020 Z" fill="#c6c6c6"/>
<path d="M1684 1008 l-2.4 3.4 h2 l-1.6 3.2 l4 -4.2 h-2 l1.8 -2.4 z" fill="#c6c6c6"/>
<path d="M1702.4 1008 L1699.4 1020 L1695.0 1025.6 L1702.4 1021 L1709.8 1025.6 L1705.4 1020 Z" fill="#c6c6c6"/>
<text x="1720.4" y="1020.9" font-family='"Liberation Sans",sans-serif' font-size="11.5" fill="#ececec" textLength="12.6" lengthAdjust="spacingAndGlyphs" >1:1</text>
<path d="M1737.1 1015.2 h7.4 l-3.7 4.4 z" fill="#ececec"/>
<circle cx="1762.4" cy="1016.8" r="4.6" stroke="#e0e0e0" stroke-width="3.2" fill="none"/><circle cx="1762.4" cy="1016.8" r="6.8" stroke="#e0e0e0" stroke-width="2.6" fill="none" stroke-dasharray="2.6 2.74"/>
<path d="M1778.7 1015.2 h7.4 l-3.7 4.4 z" fill="#ececec"/>
<path d="M1794.6 1017 H1811 M1802.8 1008.8 V1025.2" stroke="#ececec" stroke-width="1.6" fill="none"/>
<rect x="1822.4" y="1009.4" width="5" height="5" stroke="#c8c8c8" stroke-width="1.1" fill="none"/><circle cx="1835.6" cy="1016.6" r="3" stroke="#c8c8c8" stroke-width="1.1" fill="none"/><path d="M1827.8 1019 L1831.2 1024.6 H1824.4 Z" stroke="#c8c8c8" stroke-width="1.1" fill="none"/>
<path d="M1849.6 1008 H1858 L1861 1011 V1018 H1849.6 Z" fill="#6cb4ec"/><rect x="1849.6" y="1018" width="8" height="6.6" fill="#f4d040"/><path d="M1852 1013 H1858.6 M1855.2 1009.6 V1016.4" stroke="#fff" stroke-width="1.2"/><path d="M1856.6 1022.4 l2.4 2.4 l4 -4.6" stroke="#28a838" stroke-width="1.8" fill="none"/>
<rect x="1875" y="1010" width="14.6" height="12.6" stroke="#d8d8d8" stroke-width="1.3" fill="none"/><path d="M1878 1019.6 L1886.6 1013 M1878 1019.6 v-3 m0 3 h3 M1886.6 1013 v3 m0 -3 h-3" stroke="#d8d8d8" stroke-width="1.1" fill="none"/>
<path d="M1898.6 1010.6 H1913 M1898.6 1016.8 H1913 M1898.6 1023 H1913" stroke="#ececec" stroke-width="1.8"/>
</svg>
</div>
<div class="r notify" style="top:895px;height:134px">
<svg width="1913" height="134" viewBox="0 895 1913 134">
<path d="M1913 902.6 H1542 Q1530 902.6 1530 914.6 V985 Q1530 997 1542 997 H1811 L1842 1017 L1828 997 H1913" fill="#ffffe1" stroke="#000000" stroke-width="1.2"/>
<text x="1549.0" y="923.9" font-family='"Liberation Sans",sans-serif' font-size="12.6" fill="#101010" font-weight="bold" textLength="202.8" lengthAdjust="spacingAndGlyphs" >3D Display Performance Notification</text>
<text x="1545.2" y="946.3" font-family='"Liberation Sans",sans-serif' font-size="12" fill="#141414" textLength="362.2" lengthAdjust="spacingAndGlyphs" >Enhanced 3D performance is not available for the current visual style.</text>
<text x="1545.2" y="961.1" font-family='"Liberation Sans",sans-serif' font-size="12" fill="#141414" textLength="188.2" lengthAdjust="spacingAndGlyphs" >The required settings are listed here:</text>
<text x="1545.2" y="982.1" font-family='"Liberation Sans",sans-serif' font-size="12" fill="#1010e8" textLength="134.6" lengthAdjust="spacingAndGlyphs" text-decoration="underline">VISUALSTYLES Command</text>
<rect x="1896.4" y="913" width="14.6" height="13.4" fill="#f0f0e4" stroke="#8a8a9a" stroke-width="1"/>
<path d="M1900.2 916.2 L1907.2 923.2 M1907.2 916.2 L1900.2 923.2" stroke="#0a0a0a" stroke-width="2" fill="none"/>
</svg>
</div>
<div class="r appbtn" style="top:0px;height:42px">
<svg width="42" height="42" viewBox="0 0 42 42">
<defs><linearGradient id="appg" x1="0" y1="0" x2="0" y2="1"><stop offset="0" stop-color="#a8a8a8"/><stop offset="0.5" stop-color="#8a8a8a"/><stop offset="1" stop-color="#565656"/></linearGradient></defs>
<rect x="0.5" y="0.5" width="40" height="40" fill="url(#appg)" stroke="#141414" stroke-width="1.4"/>
<path d="M4.6 28.6 L15.4 3.4 H21.6 L28 28.4 H22.4 L20.6 21.4 L11.8 24.4 L10 28.6 Z M13.6 19.4 L19.6 17.2 L17.8 9.4 Z" fill="#c8141c" fill-rule="evenodd"/>
<path d="M4.6 28.6 L11.8 24.4 L10 28.6 Z M22.4 28.4 L20.6 21.4 L28 28.4 Z" fill="#e8747a"/>
<path d="M31.6 18.0 h6.0 l-3.0 3.6 z" fill="#1a1a1a"/>
</svg>
</div>
</body></html>
